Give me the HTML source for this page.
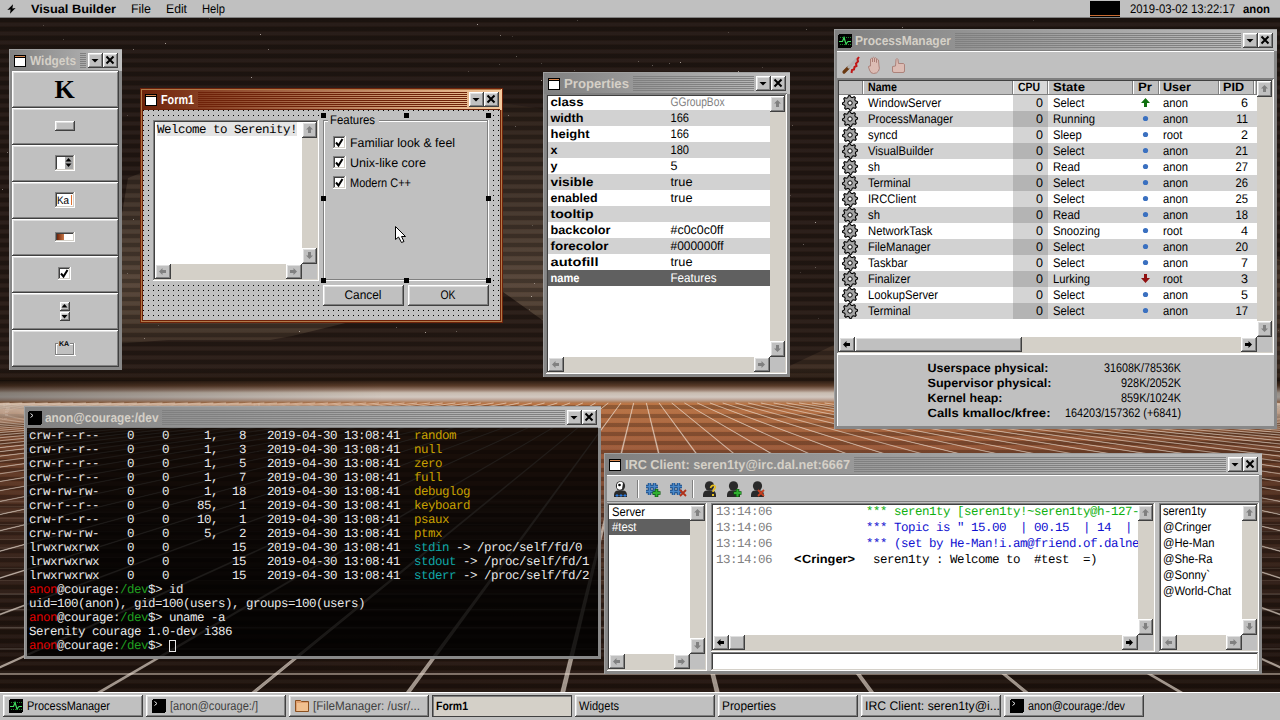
<!DOCTYPE html>
<html><head><meta charset="utf-8"><title>Serenity</title>
<style>html,body{margin:0;padding:0;width:1280px;height:720px;overflow:hidden;background:#1c130f}svg{display:block}text{shape-rendering:auto;white-space:pre}path,circle,polygon,ellipse,polyline{shape-rendering:geometricPrecision}</style>
</head><body>
<svg width="1280" height="720" viewBox="0 0 1280 720" shape-rendering="crispEdges" text-rendering="geometricPrecision"><defs>
<linearGradient id="ga" x1="0" y1="0" x2="1" y2="0"><stop offset="0" stop-color="#6e2209"/><stop offset="1" stop-color="#f4ca9e"/></linearGradient>
<linearGradient id="gi" x1="0" y1="0" x2="1" y2="0"><stop offset="0" stop-color="#808080"/><stop offset="1" stop-color="#c0c0c0"/></linearGradient>
<linearGradient id="sky" x1="0" y1="0" x2="0" y2="1">
 <stop offset="0" stop-color="#231813"/>
 <stop offset="1" stop-color="#2a1d17"/>
</linearGradient>
<linearGradient id="mtnL" x1="0" x2="0" gradientUnits="userSpaceOnUse" y1="100" y2="345">
 <stop offset="0" stop-color="#2a1e17"/>
 <stop offset="0.35" stop-color="#3e3027"/>
 <stop offset="0.75" stop-color="#564538"/>
 <stop offset="0.9" stop-color="#4a3a2e"/>
 <stop offset="1" stop-color="#3a2c22"/>
</linearGradient>
<linearGradient id="mtnR" x1="0" y1="0" x2="0" y2="1">
 <stop offset="0" stop-color="#463428"/>
 <stop offset="1" stop-color="#3a2a20"/>
</linearGradient>
<linearGradient id="hz" x1="0" x2="0" gradientUnits="userSpaceOnUse" y1="368" y2="403">
 <stop offset="0" stop-color="#22170f" stop-opacity="0"/>
 <stop offset="0.34" stop-color="#26180f" stop-opacity="0.9"/>
 <stop offset="0.51" stop-color="#5a3c2a" stop-opacity="1"/>
 <stop offset="0.63" stop-color="#9a8070" stop-opacity="1"/>
 <stop offset="0.71" stop-color="#c8bcb0" stop-opacity="1"/>
 <stop offset="0.83" stop-color="#d2c8c0" stop-opacity="1"/>
 <stop offset="0.91" stop-color="#bca496" stop-opacity="1"/>
 <stop offset="1" stop-color="#b07448" stop-opacity="1"/>
</linearGradient>
<linearGradient id="hzx" x1="0" y1="0" x2="1" y2="0">
 <stop offset="0" stop-color="#000" stop-opacity="0.35"/>
 <stop offset="0.3" stop-color="#000" stop-opacity="0"/>
 <stop offset="0.7" stop-color="#000" stop-opacity="0"/>
 <stop offset="1" stop-color="#000" stop-opacity="0.25"/>
</linearGradient>
<linearGradient id="floor" x1="0" y1="0" x2="0" y2="1">
 <stop offset="0" stop-color="#ba7444"/>
 <stop offset="0.14" stop-color="#a05c3a"/>
 <stop offset="0.40" stop-color="#5e3a2a"/>
 <stop offset="0.68" stop-color="#38241a"/>
 <stop offset="1" stop-color="#301d14"/>
</linearGradient>
<radialGradient id="fvig" gradientUnits="userSpaceOnUse" cx="640" cy="403" r="700" gradientTransform="translate(640 403) scale(1 0.45) translate(-640 -403)">
 <stop offset="0" stop-color="#000" stop-opacity="0"/>
 <stop offset="0.45" stop-color="#000" stop-opacity="0.05"/>
 <stop offset="1" stop-color="#000" stop-opacity="0.35"/>
</radialGradient>
<pattern id="stripes" width="8" height="9" patternUnits="userSpaceOnUse">
 <rect width="8" height="4" fill="#000" fill-opacity="0.22"/>
 <rect y="5" width="8" height="3" fill="#fff" fill-opacity="0.025"/>
</pattern>
<pattern id="dots" width="5" height="5" patternUnits="userSpaceOnUse" x="143" y="110">
 <rect width="1" height="1" fill="#000"/>
</pattern>
</defs>
<rect x="0" y="0" width="1280" height="720" fill="#1c130f"/>
<rect x="0" y="18" width="1280" height="385" fill="url(#sky)"/>
<polygon points="100,345 128,178 300,110 480,100 620,120 700,376 560,376 545,322 503,292 440,300 292,336 270,340 168,340" fill="url(#mtnL)" shape-rendering="geometricPrecision"/>
<polygon points="760,380 834,345 1000,250 1180,230 1280,260 1280,380" fill="url(#mtnR)" shape-rendering="geometricPrecision"/>
<rect x="663" y="95" width="1" height="1" fill="#d8d0c8" fill-opacity="0.7"/><rect x="98" y="55" width="1" height="1" fill="#d8d0c8" fill-opacity="0.25"/><rect x="748" y="316" width="1" height="1" fill="#d8d0c8" fill-opacity="0.25"/><rect x="1039" y="127" width="1" height="1" fill="#d8d0c8" fill-opacity="0.25"/><rect x="176" y="240" width="1" height="1" fill="#d8d0c8" fill-opacity="0.7"/><rect x="143" y="141" width="1" height="1" fill="#d8d0c8" fill-opacity="0.25"/><rect x="1128" y="235" width="1" height="1" fill="#d8d0c8" fill-opacity="0.25"/><rect x="1158" y="81" width="1" height="1" fill="#d8d0c8" fill-opacity="0.35"/><rect x="1193" y="49" width="1" height="1" fill="#d8d0c8" fill-opacity="0.7"/><rect x="101" y="131" width="1" height="1" fill="#d8d0c8" fill-opacity="0.25"/><rect x="1140" y="86" width="1" height="1" fill="#d8d0c8" fill-opacity="0.5"/><rect x="858" y="91" width="1" height="1" fill="#d8d0c8" fill-opacity="0.25"/><rect x="1169" y="175" width="1" height="1" fill="#d8d0c8" fill-opacity="0.35"/><rect x="211" y="315" width="1" height="1" fill="#d8d0c8" fill-opacity="0.35"/><rect x="762" y="67" width="1" height="1" fill="#d8d0c8" fill-opacity="0.25"/><rect x="1155" y="48" width="1" height="1" fill="#d8d0c8" fill-opacity="0.35"/><rect x="1016" y="290" width="1" height="1" fill="#d8d0c8" fill-opacity="0.7"/><rect x="643" y="256" width="1" height="1" fill="#d8d0c8" fill-opacity="0.7"/><rect x="740" y="171" width="1" height="1" fill="#d8d0c8" fill-opacity="0.35"/><rect x="368" y="142" width="1" height="1" fill="#d8d0c8" fill-opacity="0.25"/><rect x="1176" y="171" width="1" height="1" fill="#d8d0c8" fill-opacity="0.7"/><rect x="703" y="247" width="1" height="1" fill="#d8d0c8" fill-opacity="0.5"/><rect x="1247" y="55" width="1" height="1" fill="#d8d0c8" fill-opacity="0.25"/><rect x="1048" y="232" width="1" height="1" fill="#d8d0c8" fill-opacity="0.35"/><rect x="700" y="95" width="1" height="1" fill="#d8d0c8" fill-opacity="0.7"/><rect x="863" y="38" width="1" height="1" fill="#d8d0c8" fill-opacity="0.25"/><rect x="1142" y="311" width="1" height="1" fill="#d8d0c8" fill-opacity="0.5"/><rect x="696" y="197" width="1" height="1" fill="#d8d0c8" fill-opacity="0.7"/><rect x="1187" y="251" width="1" height="1" fill="#d8d0c8" fill-opacity="0.25"/><rect x="191" y="156" width="1" height="1" fill="#d8d0c8" fill-opacity="0.7"/><rect x="133" y="49" width="1" height="1" fill="#d8d0c8" fill-opacity="0.5"/><rect x="1183" y="246" width="1" height="1" fill="#d8d0c8" fill-opacity="0.5"/><rect x="790" y="195" width="1" height="1" fill="#d8d0c8" fill-opacity="0.25"/><rect x="945" y="199" width="1" height="1" fill="#d8d0c8" fill-opacity="0.35"/><rect x="1251" y="77" width="1" height="1" fill="#d8d0c8" fill-opacity="0.7"/><rect x="120" y="129" width="1" height="1" fill="#d8d0c8" fill-opacity="0.5"/><rect x="264" y="144" width="1" height="1" fill="#d8d0c8" fill-opacity="0.7"/><rect x="800" y="272" width="1" height="1" fill="#d8d0c8" fill-opacity="0.25"/><rect x="340" y="247" width="1" height="1" fill="#d8d0c8" fill-opacity="0.7"/><rect x="1125" y="160" width="1" height="1" fill="#d8d0c8" fill-opacity="0.35"/><rect x="881" y="299" width="1" height="1" fill="#d8d0c8" fill-opacity="0.5"/><rect x="850" y="201" width="1" height="1" fill="#d8d0c8" fill-opacity="0.7"/><rect x="472" y="95" width="1" height="1" fill="#d8d0c8" fill-opacity="0.25"/><rect x="360" y="95" width="1" height="1" fill="#d8d0c8" fill-opacity="0.35"/><rect x="477" y="24" width="1" height="1" fill="#d8d0c8" fill-opacity="0.7"/><rect x="1206" y="111" width="1" height="1" fill="#d8d0c8" fill-opacity="0.5"/><rect x="577" y="20" width="1" height="1" fill="#d8d0c8" fill-opacity="0.35"/><rect x="858" y="291" width="1" height="1" fill="#d8d0c8" fill-opacity="0.5"/><rect x="1248" y="307" width="1" height="1" fill="#d8d0c8" fill-opacity="0.5"/><rect x="257" y="281" width="1" height="1" fill="#d8d0c8" fill-opacity="0.25"/><rect x="935" y="304" width="1" height="1" fill="#d8d0c8" fill-opacity="0.7"/><rect x="815" y="222" width="1" height="1" fill="#d8d0c8" fill-opacity="0.7"/><rect x="212" y="264" width="1" height="1" fill="#d8d0c8" fill-opacity="0.7"/><rect x="127" y="115" width="1" height="1" fill="#d8d0c8" fill-opacity="0.25"/><rect x="427" y="243" width="1" height="1" fill="#d8d0c8" fill-opacity="0.35"/><rect x="225" y="192" width="1" height="1" fill="#d8d0c8" fill-opacity="0.25"/><rect x="209" y="18" width="1" height="1" fill="#d8d0c8" fill-opacity="0.35"/><rect x="1098" y="69" width="1" height="1" fill="#d8d0c8" fill-opacity="0.5"/><rect x="1256" y="31" width="1" height="1" fill="#d8d0c8" fill-opacity="0.25"/><rect x="425" y="332" width="1" height="1" fill="#d8d0c8" fill-opacity="0.7"/><rect x="304" y="147" width="1" height="1" fill="#d8d0c8" fill-opacity="0.5"/><rect x="1233" y="204" width="1" height="1" fill="#d8d0c8" fill-opacity="0.7"/><rect x="251" y="77" width="1" height="1" fill="#d8d0c8" fill-opacity="0.7"/><rect x="954" y="263" width="1" height="1" fill="#d8d0c8" fill-opacity="0.7"/><rect x="638" y="61" width="1" height="1" fill="#d8d0c8" fill-opacity="0.35"/><rect x="209" y="193" width="1" height="1" fill="#d8d0c8" fill-opacity="0.5"/><rect x="980" y="100" width="1" height="1" fill="#d8d0c8" fill-opacity="0.25"/><rect x="420" y="288" width="1" height="1" fill="#d8d0c8" fill-opacity="0.5"/><rect x="300" y="296" width="1" height="1" fill="#d8d0c8" fill-opacity="0.25"/><rect x="1081" y="170" width="1" height="1" fill="#d8d0c8" fill-opacity="0.25"/><rect x="534" y="283" width="1" height="1" fill="#d8d0c8" fill-opacity="0.5"/><rect x="342" y="200" width="1" height="1" fill="#d8d0c8" fill-opacity="0.35"/><rect x="1090" y="295" width="1" height="1" fill="#d8d0c8" fill-opacity="0.5"/><rect x="456" y="331" width="1" height="1" fill="#d8d0c8" fill-opacity="0.35"/><rect x="490" y="223" width="1" height="1" fill="#d8d0c8" fill-opacity="0.35"/><rect x="409" y="283" width="1" height="1" fill="#d8d0c8" fill-opacity="0.7"/><rect x="728" y="32" width="1" height="1" fill="#d8d0c8" fill-opacity="0.25"/><rect x="572" y="259" width="1" height="1" fill="#d8d0c8" fill-opacity="0.5"/><rect x="396" y="327" width="1" height="1" fill="#d8d0c8" fill-opacity="0.5"/><rect x="915" y="196" width="1" height="1" fill="#d8d0c8" fill-opacity="0.5"/><rect x="164" y="130" width="1" height="1" fill="#d8d0c8" fill-opacity="0.25"/><rect x="464" y="258" width="1" height="1" fill="#d8d0c8" fill-opacity="0.35"/><rect x="691" y="122" width="1" height="1" fill="#d8d0c8" fill-opacity="0.7"/><rect x="1278" y="330" width="1" height="1" fill="#d8d0c8" fill-opacity="0.25"/><rect x="981" y="194" width="1" height="1" fill="#d8d0c8" fill-opacity="0.25"/><rect x="245" y="216" width="1" height="1" fill="#d8d0c8" fill-opacity="0.35"/><rect x="979" y="109" width="1" height="1" fill="#d8d0c8" fill-opacity="0.7"/><rect x="680" y="62" width="1" height="1" fill="#d8d0c8" fill-opacity="0.7"/><rect x="948" y="223" width="1" height="1" fill="#d8d0c8" fill-opacity="0.25"/><rect x="325" y="105" width="1" height="1" fill="#d8d0c8" fill-opacity="0.35"/><rect x="56" y="95" width="1" height="1" fill="#d8d0c8" fill-opacity="0.7"/><rect x="299" y="331" width="1" height="1" fill="#d8d0c8" fill-opacity="0.7"/><rect x="717" y="97" width="1" height="1" fill="#d8d0c8" fill-opacity="0.35"/><rect x="43" y="25" width="1" height="1" fill="#d8d0c8" fill-opacity="0.25"/><rect x="1078" y="89" width="1" height="1" fill="#d8d0c8" fill-opacity="0.7"/><rect x="398" y="126" width="1" height="1" fill="#d8d0c8" fill-opacity="0.25"/><rect x="515" y="126" width="1" height="1" fill="#d8d0c8" fill-opacity="0.5"/><rect x="1026" y="141" width="1" height="1" fill="#d8d0c8" fill-opacity="0.5"/><rect x="531" y="296" width="1" height="1" fill="#d8d0c8" fill-opacity="0.7"/><rect x="268" y="49" width="1" height="1" fill="#d8d0c8" fill-opacity="0.5"/><rect x="938" y="316" width="1" height="1" fill="#d8d0c8" fill-opacity="0.7"/><rect x="1027" y="84" width="1" height="1" fill="#d8d0c8" fill-opacity="0.35"/><rect x="1072" y="279" width="1" height="1" fill="#d8d0c8" fill-opacity="0.25"/><rect x="901" y="111" width="1" height="1" fill="#d8d0c8" fill-opacity="0.25"/><rect x="306" y="106" width="1" height="1" fill="#d8d0c8" fill-opacity="0.35"/><rect x="969" y="334" width="1" height="1" fill="#d8d0c8" fill-opacity="0.25"/><rect x="1139" y="49" width="1" height="1" fill="#d8d0c8" fill-opacity="0.5"/><rect x="1061" y="289" width="1" height="1" fill="#d8d0c8" fill-opacity="0.7"/><rect x="217" y="304" width="1" height="1" fill="#d8d0c8" fill-opacity="0.25"/><rect x="508" y="115" width="1" height="1" fill="#d8d0c8" fill-opacity="0.5"/><rect x="86" y="68" width="1" height="1" fill="#d8d0c8" fill-opacity="0.7"/><rect x="1150" y="32" width="1" height="1" fill="#d8d0c8" fill-opacity="0.25"/><rect x="907" y="184" width="1" height="1" fill="#d8d0c8" fill-opacity="0.35"/><rect x="567" y="249" width="1" height="1" fill="#d8d0c8" fill-opacity="0.7"/><rect x="1039" y="144" width="1" height="1" fill="#d8d0c8" fill-opacity="0.5"/><rect x="1145" y="121" width="1" height="1" fill="#d8d0c8" fill-opacity="0.7"/><rect x="280" y="231" width="1" height="1" fill="#d8d0c8" fill-opacity="0.25"/><rect x="803" y="244" width="1" height="1" fill="#d8d0c8" fill-opacity="0.5"/><rect x="148" y="141" width="1" height="1" fill="#d8d0c8" fill-opacity="0.7"/><rect x="149" y="126" width="1" height="1" fill="#d8d0c8" fill-opacity="0.5"/><rect x="250" y="97" width="1" height="1" fill="#d8d0c8" fill-opacity="0.5"/><rect x="292" y="147" width="1" height="1" fill="#d8d0c8" fill-opacity="0.35"/><rect x="957" y="130" width="1" height="1" fill="#d8d0c8" fill-opacity="0.25"/><rect x="815" y="267" width="1" height="1" fill="#d8d0c8" fill-opacity="0.35"/><rect x="458" y="100" width="1" height="1" fill="#d8d0c8" fill-opacity="0.7"/><rect x="1055" y="224" width="1" height="1" fill="#d8d0c8" fill-opacity="0.5"/><rect x="862" y="118" width="1" height="1" fill="#d8d0c8" fill-opacity="0.5"/><rect x="652" y="65" width="1" height="1" fill="#d8d0c8" fill-opacity="0.5"/><rect x="39" y="191" width="1" height="1" fill="#d8d0c8" fill-opacity="0.7"/><rect x="902" y="27" width="1" height="1" fill="#d8d0c8" fill-opacity="0.7"/><rect x="678" y="282" width="1" height="1" fill="#d8d0c8" fill-opacity="0.5"/><rect x="1049" y="50" width="1" height="1" fill="#d8d0c8" fill-opacity="0.25"/><rect x="468" y="71" width="1" height="1" fill="#d8d0c8" fill-opacity="0.25"/><rect x="543" y="157" width="1" height="1" fill="#d8d0c8" fill-opacity="0.25"/><rect x="371" y="156" width="1" height="1" fill="#d8d0c8" fill-opacity="0.35"/><rect x="864" y="150" width="1" height="1" fill="#d8d0c8" fill-opacity="0.7"/><rect x="305" y="292" width="1" height="1" fill="#d8d0c8" fill-opacity="0.7"/><rect x="669" y="63" width="1" height="1" fill="#d8d0c8" fill-opacity="0.5"/><rect x="117" y="111" width="1" height="1" fill="#d8d0c8" fill-opacity="0.7"/><rect x="148" y="155" width="1" height="1" fill="#d8d0c8" fill-opacity="0.25"/><rect x="181" y="151" width="1" height="1" fill="#d8d0c8" fill-opacity="0.25"/><rect x="1245" y="131" width="1" height="1" fill="#d8d0c8" fill-opacity="0.25"/><rect x="541" y="80" width="1" height="1" fill="#d8d0c8" fill-opacity="0.7"/><rect x="23" y="191" width="1" height="1" fill="#d8d0c8" fill-opacity="0.7"/><rect x="548" y="336" width="1" height="1" fill="#d8d0c8" fill-opacity="0.35"/><rect x="88" y="287" width="1" height="1" fill="#d8d0c8" fill-opacity="0.35"/><rect x="224" y="100" width="1" height="1" fill="#d8d0c8" fill-opacity="0.5"/><rect x="103" y="110" width="1" height="1" fill="#d8d0c8" fill-opacity="0.35"/><rect x="638" y="339" width="1" height="1" fill="#d8d0c8" fill-opacity="0.5"/><rect x="1087" y="123" width="1" height="1" fill="#d8d0c8" fill-opacity="0.5"/><rect x="912" y="274" width="1" height="1" fill="#d8d0c8" fill-opacity="0.35"/><rect x="554" y="195" width="1" height="1" fill="#d8d0c8" fill-opacity="0.25"/><rect x="512" y="36" width="1" height="1" fill="#d8d0c8" fill-opacity="0.25"/><rect x="37" y="276" width="1" height="1" fill="#d8d0c8" fill-opacity="0.35"/><rect x="1053" y="261" width="1" height="1" fill="#d8d0c8" fill-opacity="0.35"/><rect x="915" y="72" width="1" height="1" fill="#d8d0c8" fill-opacity="0.7"/><rect x="1013" y="297" width="1" height="1" fill="#d8d0c8" fill-opacity="0.7"/><rect x="1037" y="175" width="1" height="1" fill="#d8d0c8" fill-opacity="0.35"/><rect x="470" y="193" width="1" height="1" fill="#d8d0c8" fill-opacity="0.35"/><rect x="286" y="225" width="1" height="1" fill="#d8d0c8" fill-opacity="0.5"/><rect x="111" y="84" width="1" height="1" fill="#d8d0c8" fill-opacity="0.25"/><rect x="144" y="338" width="1" height="1" fill="#d8d0c8" fill-opacity="0.5"/><rect x="882" y="101" width="1" height="1" fill="#d8d0c8" fill-opacity="0.25"/><rect x="173" y="213" width="1" height="1" fill="#d8d0c8" fill-opacity="0.5"/><rect x="1226" y="142" width="1" height="1" fill="#d8d0c8" fill-opacity="0.5"/><rect x="92" y="253" width="1" height="1" fill="#d8d0c8" fill-opacity="0.35"/><rect x="322" y="155" width="1" height="1" fill="#d8d0c8" fill-opacity="0.7"/><rect x="7" y="152" width="1" height="1" fill="#d8d0c8" fill-opacity="0.5"/><rect x="673" y="298" width="1" height="1" fill="#d8d0c8" fill-opacity="0.5"/><rect x="500" y="35" width="1" height="1" fill="#d8d0c8" fill-opacity="0.5"/><rect x="446" y="200" width="1" height="1" fill="#d8d0c8" fill-opacity="0.35"/><rect x="2" y="189" width="1" height="1" fill="#d8d0c8" fill-opacity="0.7"/><rect x="171" y="261" width="1" height="1" fill="#d8d0c8" fill-opacity="0.5"/><rect x="1029" y="120" width="1" height="1" fill="#d8d0c8" fill-opacity="0.35"/><rect x="1033" y="20" width="1" height="1" fill="#d8d0c8" fill-opacity="0.25"/><rect x="541" y="63" width="1" height="1" fill="#d8d0c8" fill-opacity="0.35"/><rect x="818" y="318" width="1" height="1" fill="#d8d0c8" fill-opacity="0.25"/><rect x="806" y="29" width="1" height="1" fill="#d8d0c8" fill-opacity="0.5"/><rect x="623" y="340" width="1" height="1" fill="#d8d0c8" fill-opacity="0.35"/><rect x="173" y="317" width="1" height="1" fill="#d8d0c8" fill-opacity="0.35"/><rect x="1221" y="217" width="1" height="1" fill="#d8d0c8" fill-opacity="0.5"/><rect x="1012" y="94" width="1" height="1" fill="#d8d0c8" fill-opacity="0.5"/><rect x="1267" y="92" width="1" height="1" fill="#d8d0c8" fill-opacity="0.25"/><rect x="1050" y="339" width="1" height="1" fill="#d8d0c8" fill-opacity="0.7"/><rect x="1035" y="89" width="1" height="1" fill="#d8d0c8" fill-opacity="0.25"/><rect x="1196" y="135" width="1" height="1" fill="#d8d0c8" fill-opacity="0.25"/><rect x="63" y="39" width="1" height="1" fill="#d8d0c8" fill-opacity="0.35"/><rect x="738" y="71" width="1" height="1" fill="#d8d0c8" fill-opacity="0.7"/><rect x="924" y="303" width="1" height="1" fill="#d8d0c8" fill-opacity="0.25"/><rect x="38" y="338" width="1" height="1" fill="#d8d0c8" fill-opacity="0.35"/><rect x="1002" y="153" width="1" height="1" fill="#d8d0c8" fill-opacity="0.25"/><rect x="935" y="53" width="1" height="1" fill="#d8d0c8" fill-opacity="0.25"/><rect x="1077" y="51" width="1" height="1" fill="#d8d0c8" fill-opacity="0.7"/><rect x="516" y="56" width="1" height="1" fill="#d8d0c8" fill-opacity="0.5"/><rect x="480" y="123" width="1" height="1" fill="#d8d0c8" fill-opacity="0.35"/><rect x="942" y="270" width="1" height="1" fill="#d8d0c8" fill-opacity="0.7"/><rect x="157" y="263" width="1" height="1" fill="#d8d0c8" fill-opacity="0.5"/><rect x="95" y="333" width="1" height="1" fill="#d8d0c8" fill-opacity="0.35"/><rect x="158" y="325" width="1" height="1" fill="#d8d0c8" fill-opacity="0.35"/><rect x="679" y="148" width="1" height="1" fill="#d8d0c8" fill-opacity="0.5"/><rect x="1272" y="308" width="1" height="1" fill="#d8d0c8" fill-opacity="0.35"/><rect x="25" y="264" width="1" height="1" fill="#d8d0c8" fill-opacity="0.25"/><rect x="994" y="155" width="1" height="1" fill="#d8d0c8" fill-opacity="0.25"/><rect x="445" y="268" width="1" height="1" fill="#d8d0c8" fill-opacity="0.5"/><rect x="1057" y="164" width="1" height="1" fill="#d8d0c8" fill-opacity="0.7"/><rect x="954" y="256" width="1" height="1" fill="#d8d0c8" fill-opacity="0.25"/><rect x="1124" y="120" width="1" height="1" fill="#d8d0c8" fill-opacity="0.5"/><rect x="175" y="260" width="1" height="1" fill="#d8d0c8" fill-opacity="0.25"/><rect x="593" y="252" width="1" height="1" fill="#d8d0c8" fill-opacity="0.25"/><rect x="1037" y="248" width="1" height="1" fill="#d8d0c8" fill-opacity="0.5"/><rect x="792" y="125" width="1" height="1" fill="#d8d0c8" fill-opacity="0.35"/><rect x="152" y="315" width="1" height="1" fill="#d8d0c8" fill-opacity="0.25"/><rect x="290" y="286" width="1" height="1" fill="#d8d0c8" fill-opacity="0.5"/><rect x="736" y="85" width="1" height="1" fill="#d8d0c8" fill-opacity="0.5"/><rect x="230" y="204" width="1" height="1" fill="#d8d0c8" fill-opacity="0.35"/><rect x="1019" y="266" width="1" height="1" fill="#d8d0c8" fill-opacity="0.7"/><rect x="50" y="99" width="1" height="1" fill="#d8d0c8" fill-opacity="0.25"/><rect x="1006" y="248" width="1" height="1" fill="#d8d0c8" fill-opacity="0.7"/><rect x="618" y="90" width="1" height="1" fill="#d8d0c8" fill-opacity="0.7"/><rect x="704" y="210" width="1" height="1" fill="#d8d0c8" fill-opacity="0.5"/><rect x="247" y="187" width="1" height="1" fill="#d8d0c8" fill-opacity="0.25"/><rect x="664" y="191" width="1" height="1" fill="#d8d0c8" fill-opacity="0.7"/><rect x="245" y="118" width="1" height="1" fill="#d8d0c8" fill-opacity="0.25"/><rect x="593" y="147" width="1" height="1" fill="#d8d0c8" fill-opacity="0.5"/><rect x="133" y="219" width="1" height="1" fill="#d8d0c8" fill-opacity="0.7"/><rect x="1206" y="57" width="1" height="1" fill="#d8d0c8" fill-opacity="0.5"/><rect x="876" y="158" width="1" height="1" fill="#d8d0c8" fill-opacity="0.25"/><rect x="574" y="70" width="1" height="1" fill="#d8d0c8" fill-opacity="0.25"/><rect x="584" y="94" width="1" height="1" fill="#d8d0c8" fill-opacity="0.35"/><rect x="544" y="241" width="1" height="1" fill="#d8d0c8" fill-opacity="0.5"/><rect x="388" y="209" width="1" height="1" fill="#d8d0c8" fill-opacity="0.7"/><rect x="59" y="222" width="1" height="1" fill="#d8d0c8" fill-opacity="0.35"/><rect x="165" y="43" width="1" height="1" fill="#d8d0c8" fill-opacity="0.7"/><rect x="923" y="332" width="1" height="1" fill="#d8d0c8" fill-opacity="0.35"/><rect x="586" y="266" width="1" height="1" fill="#d8d0c8" fill-opacity="0.25"/><rect x="1126" y="83" width="1" height="1" fill="#d8d0c8" fill-opacity="0.35"/><rect x="967" y="230" width="1" height="1" fill="#d8d0c8" fill-opacity="0.5"/><rect x="577" y="170" width="1" height="1" fill="#d8d0c8" fill-opacity="0.5"/><rect x="532" y="225" width="1" height="1" fill="#d8d0c8" fill-opacity="0.35"/><rect x="616" y="265" width="1" height="1" fill="#d8d0c8" fill-opacity="0.7"/><rect x="245" y="103" width="1" height="1" fill="#d8d0c8" fill-opacity="0.35"/><rect x="153" y="124" width="1" height="1" fill="#d8d0c8" fill-opacity="0.7"/><rect x="1127" y="130" width="1" height="1" fill="#d8d0c8" fill-opacity="0.7"/><rect x="681" y="248" width="1" height="1" fill="#d8d0c8" fill-opacity="0.7"/><rect x="285" y="298" width="1" height="1" fill="#d8d0c8" fill-opacity="0.35"/><rect x="499" y="64" width="1" height="1" fill="#d8d0c8" fill-opacity="0.35"/><rect x="700" y="302" width="1" height="1" fill="#d8d0c8" fill-opacity="0.25"/><rect x="653" y="140" width="1" height="1" fill="#d8d0c8" fill-opacity="0.5"/><rect x="529" y="309" width="1" height="1" fill="#d8d0c8" fill-opacity="0.35"/><rect x="41" y="229" width="1" height="1" fill="#d8d0c8" fill-opacity="0.7"/><rect x="847" y="286" width="1" height="1" fill="#d8d0c8" fill-opacity="0.35"/><rect x="771" y="156" width="1" height="1" fill="#d8d0c8" fill-opacity="0.5"/><rect x="127" y="273" width="1" height="1" fill="#d8d0c8" fill-opacity="0.5"/><rect x="1176" y="202" width="1" height="1" fill="#d8d0c8" fill-opacity="0.35"/><rect x="1030" y="288" width="1" height="1" fill="#d8d0c8" fill-opacity="0.35"/><rect x="189" y="156" width="1" height="1" fill="#d8d0c8" fill-opacity="0.35"/><rect x="787" y="222" width="1" height="1" fill="#d8d0c8" fill-opacity="0.7"/><rect x="884" y="177" width="1" height="1" fill="#d8d0c8" fill-opacity="0.25"/><rect x="260" y="34" width="1" height="1" fill="#d8d0c8" fill-opacity="0.7"/><rect x="969" y="318" width="1" height="1" fill="#d8d0c8" fill-opacity="0.7"/>
<rect x="0" y="368" width="1280" height="36" fill="url(#hz)"/>
<rect x="0" y="403" width="1280" height="317" fill="url(#floor)"/>
<rect x="0" y="403" width="1280" height="317" fill="url(#fvig)"/>
<rect x="0" y="380" width="1280" height="23" fill="url(#hzx)"/>
<rect x="0" y="18" width="1280" height="363" fill="url(#stripes)"/>
<rect x="0" y="403" width="1280" height="317" fill="url(#stripes)"/>
<path d="M-118.21,403 L-117.85,403 L-9357.81,720 L-9362.52,720 Z M-105.47,403 L-105.11,403 L-9189.74,720 L-9194.45,720 Z M-92.73,403 L-92.37,403 L-9021.67,720 L-9026.38,720 Z M-79.99,403 L-79.63,403 L-8853.60,720 L-8858.31,720 Z M-67.25,403 L-66.89,403 L-8685.53,720 L-8690.24,720 Z M-54.51,403 L-54.15,403 L-8517.46,720 L-8522.17,720 Z M-41.77,403 L-41.41,403 L-8349.39,720 L-8354.10,720 Z M-29.03,403 L-28.67,403 L-8181.32,720 L-8186.03,720 Z M-16.29,403 L-15.93,403 L-8013.25,720 L-8017.96,720 Z M-3.55,403 L-3.19,403 L-7845.18,720 L-7849.89,720 Z M9.19,403 L9.55,403 L-7677.11,720 L-7681.82,720 Z M21.93,403 L22.29,403 L-7509.04,720 L-7513.75,720 Z M34.67,403 L35.03,403 L-7340.97,720 L-7345.68,720 Z M47.41,403 L47.77,403 L-7172.90,720 L-7177.61,720 Z M60.15,403 L60.51,403 L-7004.83,720 L-7009.54,720 Z M72.89,403 L73.25,403 L-6836.76,720 L-6841.47,720 Z M85.63,403 L85.99,403 L-6668.69,720 L-6673.40,720 Z M98.37,403 L98.73,403 L-6500.62,720 L-6505.33,720 Z M111.11,403 L111.47,403 L-6332.55,720 L-6337.26,720 Z M123.85,403 L124.21,403 L-6164.48,720 L-6169.19,720 Z M136.59,403 L136.95,403 L-5996.41,720 L-6001.12,720 Z M149.33,403 L149.69,403 L-5828.34,720 L-5833.05,720 Z M162.07,403 L162.43,403 L-5660.27,720 L-5664.98,720 Z M174.81,403 L175.17,403 L-5492.20,720 L-5496.91,720 Z M187.55,403 L187.91,403 L-5324.13,720 L-5328.84,720 Z M200.29,403 L200.65,403 L-5156.06,720 L-5160.77,720 Z M213.03,403 L213.39,403 L-4987.99,720 L-4992.70,720 Z M225.77,403 L226.13,403 L-4819.92,720 L-4824.63,720 Z M238.51,403 L238.87,403 L-4651.85,720 L-4656.56,720 Z M251.25,403 L251.61,403 L-4483.78,720 L-4488.49,720 Z M263.99,403 L264.35,403 L-4315.71,720 L-4320.42,720 Z M276.73,403 L277.09,403 L-4147.64,720 L-4152.35,720 Z M289.47,403 L289.83,403 L-3979.57,720 L-3984.28,720 Z M302.21,403 L302.57,403 L-3811.50,720 L-3816.21,720 Z M314.95,403 L315.31,403 L-3643.43,720 L-3648.14,720 Z M327.69,403 L328.05,403 L-3475.36,720 L-3480.07,720 Z M340.43,403 L340.79,403 L-3307.29,720 L-3312.00,720 Z M353.17,403 L353.53,403 L-3139.22,720 L-3143.93,720 Z M365.91,403 L366.27,403 L-2971.15,720 L-2975.86,720 Z M378.65,403 L379.01,403 L-2803.08,720 L-2807.79,720 Z M391.39,403 L391.75,403 L-2635.01,720 L-2639.72,720 Z M404.13,403 L404.49,403 L-2466.94,720 L-2471.65,720 Z M416.87,403 L417.23,403 L-2298.87,720 L-2303.58,720 Z M429.61,403 L429.97,403 L-2130.80,720 L-2135.51,720 Z M442.35,403 L442.71,403 L-1962.73,720 L-1967.44,720 Z M455.09,403 L455.45,403 L-1794.66,720 L-1799.37,720 Z M467.83,403 L468.19,403 L-1626.59,720 L-1631.30,720 Z M480.57,403 L480.93,403 L-1458.52,720 L-1463.23,720 Z M493.31,403 L493.67,403 L-1290.45,720 L-1295.16,720 Z M506.05,403 L506.41,403 L-1122.38,720 L-1127.09,720 Z M518.79,403 L519.15,403 L-954.31,720 L-959.02,720 Z M531.53,403 L531.89,403 L-786.24,720 L-790.95,720 Z M544.27,403 L544.63,403 L-618.17,720 L-622.88,720 Z M557.01,403 L557.37,403 L-450.10,720 L-454.81,720 Z M569.75,403 L570.11,403 L-282.03,720 L-286.74,720 Z M582.49,403 L582.85,403 L-113.96,720 L-118.67,720 Z M595.23,403 L595.59,403 L54.11,720 L49.40,720 Z M607.97,403 L608.33,403 L222.18,720 L217.47,720 Z M620.71,403 L621.07,403 L390.25,720 L385.54,720 Z M633.45,403 L633.81,403 L558.32,720 L553.61,720 Z M646.19,403 L646.55,403 L726.39,720 L721.68,720 Z M658.93,403 L659.29,403 L894.46,720 L889.75,720 Z M671.67,403 L672.03,403 L1062.53,720 L1057.82,720 Z M684.41,403 L684.77,403 L1230.60,720 L1225.89,720 Z M697.15,403 L697.51,403 L1398.67,720 L1393.96,720 Z M709.89,403 L710.25,403 L1566.74,720 L1562.03,720 Z M722.63,403 L722.99,403 L1734.81,720 L1730.10,720 Z M735.37,403 L735.73,403 L1902.88,720 L1898.17,720 Z M748.11,403 L748.47,403 L2070.95,720 L2066.24,720 Z M760.85,403 L761.21,403 L2239.02,720 L2234.31,720 Z M773.59,403 L773.95,403 L2407.09,720 L2402.38,720 Z M786.33,403 L786.69,403 L2575.16,720 L2570.45,720 Z M799.07,403 L799.43,403 L2743.23,720 L2738.52,720 Z M811.81,403 L812.17,403 L2911.30,720 L2906.59,720 Z M824.55,403 L824.91,403 L3079.37,720 L3074.66,720 Z M837.29,403 L837.65,403 L3247.44,720 L3242.73,720 Z M850.03,403 L850.39,403 L3415.51,720 L3410.80,720 Z M862.77,403 L863.13,403 L3583.58,720 L3578.87,720 Z M875.51,403 L875.87,403 L3751.65,720 L3746.94,720 Z M888.25,403 L888.61,403 L3919.72,720 L3915.01,720 Z M900.99,403 L901.35,403 L4087.79,720 L4083.08,720 Z M913.73,403 L914.09,403 L4255.86,720 L4251.15,720 Z M926.47,403 L926.83,403 L4423.93,720 L4419.22,720 Z M939.21,403 L939.57,403 L4592.00,720 L4587.29,720 Z M951.95,403 L952.31,403 L4760.07,720 L4755.36,720 Z M964.69,403 L965.05,403 L4928.14,720 L4923.43,720 Z M977.43,403 L977.79,403 L5096.21,720 L5091.50,720 Z M990.17,403 L990.53,403 L5264.28,720 L5259.57,720 Z M1002.91,403 L1003.27,403 L5432.35,720 L5427.64,720 Z M1015.65,403 L1016.01,403 L5600.42,720 L5595.71,720 Z M1028.39,403 L1028.75,403 L5768.49,720 L5763.78,720 Z M1041.13,403 L1041.49,403 L5936.56,720 L5931.85,720 Z M1053.87,403 L1054.23,403 L6104.63,720 L6099.92,720 Z M1066.61,403 L1066.97,403 L6272.70,720 L6267.99,720 Z M1079.35,403 L1079.71,403 L6440.77,720 L6436.06,720 Z M1092.09,403 L1092.45,403 L6608.84,720 L6604.13,720 Z M1104.83,403 L1105.19,403 L6776.91,720 L6772.20,720 Z M1117.57,403 L1117.93,403 L6944.98,720 L6940.27,720 Z M1130.31,403 L1130.67,403 L7113.05,720 L7108.34,720 Z M1143.05,403 L1143.41,403 L7281.12,720 L7276.41,720 Z M1155.79,403 L1156.15,403 L7449.19,720 L7444.48,720 Z M1168.53,403 L1168.89,403 L7617.26,720 L7612.55,720 Z M1181.27,403 L1181.63,403 L7785.33,720 L7780.62,720 Z M1194.01,403 L1194.37,403 L7953.40,720 L7948.69,720 Z M1206.75,403 L1207.11,403 L8121.47,720 L8116.76,720 Z M1219.49,403 L1219.85,403 L8289.54,720 L8284.83,720 Z M1232.23,403 L1232.59,403 L8457.61,720 L8452.90,720 Z M1244.97,403 L1245.33,403 L8625.68,720 L8620.97,720 Z M1257.71,403 L1258.07,403 L8793.75,720 L8789.04,720 Z M1270.45,403 L1270.81,403 L8961.82,720 L8957.11,720 Z M1283.19,403 L1283.55,403 L9129.89,720 L9125.18,720 Z M1295.93,403 L1296.29,403 L9297.96,720 L9293.25,720 Z M1308.67,403 L1309.03,403 L9466.03,720 L9461.32,720 Z M1321.41,403 L1321.77,403 L9634.10,720 L9629.39,720 Z M1334.15,403 L1334.51,403 L9802.17,720 L9797.46,720 Z M1346.89,403 L1347.25,403 L9970.24,720 L9965.53,720 Z M1359.63,403 L1359.99,403 L10138.31,720 L10133.60,720 Z M1372.37,403 L1372.73,403 L10306.38,720 L10301.67,720 Z M1385.11,403 L1385.47,403 L10474.45,720 L10469.74,720 Z M1397.85,403 L1398.21,403 L10642.52,720 L10637.81,720 Z" fill="#f4e8dc" fill-opacity="0.6" stroke="#f4e8dc" stroke-opacity="0.45" stroke-width="0.7" shape-rendering="geometricPrecision"/>
<rect x="0" y="703.32" width="1280" height="1.6" fill="#f0e2d4" fill-opacity="0.55" shape-rendering="geometricPrecision"/><rect x="0" y="673.20" width="1280" height="1.6" fill="#f0e2d4" fill-opacity="0.55" shape-rendering="geometricPrecision"/><rect x="0" y="648.46" width="1280" height="1.0" fill="#f0e2d4" fill-opacity="0.30" shape-rendering="geometricPrecision"/><rect x="0" y="627.32" width="1280" height="1.0" fill="#f0e2d4" fill-opacity="0.30" shape-rendering="geometricPrecision"/><rect x="0" y="609.22" width="1280" height="1.0" fill="#f0e2d4" fill-opacity="0.30" shape-rendering="geometricPrecision"/><rect x="0" y="593.56" width="1280" height="1.0" fill="#f0e2d4" fill-opacity="0.30" shape-rendering="geometricPrecision"/><rect x="0" y="579.88" width="1280" height="1.0" fill="#f0e2d4" fill-opacity="0.14" shape-rendering="geometricPrecision"/><rect x="0" y="567.81" width="1280" height="1.0" fill="#f0e2d4" fill-opacity="0.14" shape-rendering="geometricPrecision"/><rect x="0" y="557.10" width="1280" height="1.0" fill="#f0e2d4" fill-opacity="0.14" shape-rendering="geometricPrecision"/><rect x="0" y="547.53" width="1280" height="1.0" fill="#f0e2d4" fill-opacity="0.14" shape-rendering="geometricPrecision"/><rect x="0" y="538.92" width="1280" height="1.0" fill="#f0e2d4" fill-opacity="0.14" shape-rendering="geometricPrecision"/><rect x="0" y="531.13" width="1280" height="1.0" fill="#f0e2d4" fill-opacity="0.14" shape-rendering="geometricPrecision"/><rect x="0" y="524.06" width="1280" height="1.0" fill="#f0e2d4" fill-opacity="0.14" shape-rendering="geometricPrecision"/><rect x="0" y="517.60" width="1280" height="1.0" fill="#f0e2d4" fill-opacity="0.14" shape-rendering="geometricPrecision"/><rect x="0" y="511.69" width="1280" height="1.0" fill="#f0e2d4" fill-opacity="0.14" shape-rendering="geometricPrecision"/><rect x="0" y="506.25" width="1280" height="1.0" fill="#f0e2d4" fill-opacity="0.14" shape-rendering="geometricPrecision"/><rect x="0" y="501.23" width="1280" height="1.0" fill="#f0e2d4" fill-opacity="0.14" shape-rendering="geometricPrecision"/>
<rect x="0" y="0" width="1280" height="17" fill="#c0c0c0"/>
<rect x="0" y="17" width="1280" height="1" fill="#808080"/>
<polygon points="13,4.3 7.3,10 10.6,9.6 10,13.7 15.6,8 12.4,8.4" fill="#000" shape-rendering="geometricPrecision"/>
<text x="31" y="13" font-size="12" fill="#000" font-weight="bold" textLength="85" lengthAdjust="spacingAndGlyphs" font-family='"Liberation Sans", sans-serif'>Visual Builder</text>
<text x="131" y="13" font-size="12.5" fill="#000" textLength="20" lengthAdjust="spacingAndGlyphs" font-family='"Liberation Sans", sans-serif'>File</text>
<text x="166" y="13" font-size="12.5" fill="#000" textLength="21" lengthAdjust="spacingAndGlyphs" font-family='"Liberation Sans", sans-serif'>Edit</text>
<text x="202" y="13" font-size="12.5" fill="#000" textLength="23" lengthAdjust="spacingAndGlyphs" font-family='"Liberation Sans", sans-serif'>Help</text>
<rect x="1090" y="1" width="30" height="16" fill="#000000"/>
<rect x="1090" y="15" width="30" height="1" fill="#c86a30"/>
<text x="1130" y="13" font-size="12.5" fill="#000" textLength="105" lengthAdjust="spacingAndGlyphs" font-family='"Liberation Sans", sans-serif'>2019-03-02 13:22:17</text>
<text x="1243" y="13" font-size="12" fill="#000" font-weight="bold" textLength="27" lengthAdjust="spacingAndGlyphs" font-family='"Liberation Sans", sans-serif'>anon</text>
<rect x="9" y="70" width="3" height="300" fill="#888888"/>
<rect x="119" y="70" width="3" height="300" fill="#888888"/>
<rect x="9" y="367" width="113" height="3" fill="#888888"/>
<rect x="9" y="49" width="113" height="22" fill="url(#gi)"/>
<rect x="9" y="49" width="113" height="1" fill="#a0a0a0"/>
<rect x="9" y="49" width="1" height="321" fill="#a0a0a0"/>
<rect x="12" y="70" width="107" height="1" fill="#808080"/>
<text x="30" y="65" font-size="13" fill="#d5d0c7" font-weight="bold" textLength="46" lengthAdjust="spacingAndGlyphs" font-family='"Liberation Sans", sans-serif'>Widgets</text>
<rect x="80" y="53" width="6" height="1" fill="#808080"/>
<rect x="80" y="55" width="6" height="1" fill="#808080"/>
<rect x="80" y="57" width="6" height="1" fill="#808080"/>
<rect x="80" y="59" width="6" height="1" fill="#808080"/>
<rect x="80" y="61" width="6" height="1" fill="#808080"/>
<rect x="80" y="63" width="6" height="1" fill="#808080"/>
<rect x="80" y="65" width="6" height="1" fill="#808080"/>
<rect x="80" y="67" width="6" height="1" fill="#808080"/>
<rect x="103" y="53" width="15" height="15" fill="#c0c0c0"/>
<rect x="103" y="53" width="14" height="1" fill="#ffffff"/>
<rect x="103" y="53" width="1" height="14" fill="#ffffff"/>
<rect x="103" y="67" width="15" height="1" fill="#404040"/>
<rect x="117" y="53" width="1" height="15" fill="#404040"/>
<rect x="104" y="54" width="12" height="1" fill="#dfdfdf"/>
<rect x="104" y="54" width="1" height="12" fill="#dfdfdf"/>
<rect x="104" y="66" width="13" height="1" fill="#808080"/>
<rect x="116" y="54" width="1" height="13" fill="#808080"/>
<rect x="88" y="53" width="15" height="15" fill="#c0c0c0"/>
<rect x="88" y="53" width="14" height="1" fill="#ffffff"/>
<rect x="88" y="53" width="1" height="14" fill="#ffffff"/>
<rect x="88" y="67" width="15" height="1" fill="#404040"/>
<rect x="102" y="53" width="1" height="15" fill="#404040"/>
<rect x="89" y="54" width="12" height="1" fill="#dfdfdf"/>
<rect x="89" y="54" width="1" height="12" fill="#dfdfdf"/>
<rect x="89" y="66" width="13" height="1" fill="#808080"/>
<rect x="101" y="54" width="1" height="13" fill="#808080"/>
<path d="M106.5,56.5 L113.5,63.5 M113.5,56.5 L106.5,63.5" stroke="#000" stroke-width="2"/>
<polygon points="91.5,59 98.5,59 95,62.5" fill="#000"/>
<rect x="14" y="55" width="12" height="12" fill="#000000" rx="1"/>
<rect x="15" y="56" width="10" height="1" fill="#d88850"/>
<rect x="15" y="58" width="10" height="8" fill="#ffffff"/>
<rect x="12" y="71" width="107" height="37" fill="#c0c0c0"/>
<rect x="12" y="71" width="106" height="1" fill="#ffffff"/>
<rect x="12" y="71" width="1" height="36" fill="#ffffff"/>
<rect x="12" y="107" width="107" height="1" fill="#404040"/>
<rect x="118" y="71" width="1" height="37" fill="#404040"/>
<rect x="13" y="72" width="104" height="1" fill="#dfdfdf"/>
<rect x="13" y="72" width="1" height="34" fill="#dfdfdf"/>
<rect x="13" y="106" width="105" height="1" fill="#808080"/>
<rect x="117" y="72" width="1" height="35" fill="#808080"/>
<rect x="12" y="108" width="107" height="37" fill="#c0c0c0"/>
<rect x="12" y="108" width="106" height="1" fill="#ffffff"/>
<rect x="12" y="108" width="1" height="36" fill="#ffffff"/>
<rect x="12" y="144" width="107" height="1" fill="#404040"/>
<rect x="118" y="108" width="1" height="37" fill="#404040"/>
<rect x="13" y="109" width="104" height="1" fill="#dfdfdf"/>
<rect x="13" y="109" width="1" height="34" fill="#dfdfdf"/>
<rect x="13" y="143" width="105" height="1" fill="#808080"/>
<rect x="117" y="109" width="1" height="35" fill="#808080"/>
<rect x="12" y="145" width="107" height="37" fill="#c0c0c0"/>
<rect x="12" y="145" width="106" height="1" fill="#ffffff"/>
<rect x="12" y="145" width="1" height="36" fill="#ffffff"/>
<rect x="12" y="181" width="107" height="1" fill="#404040"/>
<rect x="118" y="145" width="1" height="37" fill="#404040"/>
<rect x="13" y="146" width="104" height="1" fill="#dfdfdf"/>
<rect x="13" y="146" width="1" height="34" fill="#dfdfdf"/>
<rect x="13" y="180" width="105" height="1" fill="#808080"/>
<rect x="117" y="146" width="1" height="35" fill="#808080"/>
<rect x="12" y="182" width="107" height="37" fill="#c0c0c0"/>
<rect x="12" y="182" width="106" height="1" fill="#ffffff"/>
<rect x="12" y="182" width="1" height="36" fill="#ffffff"/>
<rect x="12" y="218" width="107" height="1" fill="#404040"/>
<rect x="118" y="182" width="1" height="37" fill="#404040"/>
<rect x="13" y="183" width="104" height="1" fill="#dfdfdf"/>
<rect x="13" y="183" width="1" height="34" fill="#dfdfdf"/>
<rect x="13" y="217" width="105" height="1" fill="#808080"/>
<rect x="117" y="183" width="1" height="35" fill="#808080"/>
<rect x="12" y="219" width="107" height="37" fill="#c0c0c0"/>
<rect x="12" y="219" width="106" height="1" fill="#ffffff"/>
<rect x="12" y="219" width="1" height="36" fill="#ffffff"/>
<rect x="12" y="255" width="107" height="1" fill="#404040"/>
<rect x="118" y="219" width="1" height="37" fill="#404040"/>
<rect x="13" y="220" width="104" height="1" fill="#dfdfdf"/>
<rect x="13" y="220" width="1" height="34" fill="#dfdfdf"/>
<rect x="13" y="254" width="105" height="1" fill="#808080"/>
<rect x="117" y="220" width="1" height="35" fill="#808080"/>
<rect x="12" y="256" width="107" height="37" fill="#c0c0c0"/>
<rect x="12" y="256" width="106" height="1" fill="#ffffff"/>
<rect x="12" y="256" width="1" height="36" fill="#ffffff"/>
<rect x="12" y="292" width="107" height="1" fill="#404040"/>
<rect x="118" y="256" width="1" height="37" fill="#404040"/>
<rect x="13" y="257" width="104" height="1" fill="#dfdfdf"/>
<rect x="13" y="257" width="1" height="34" fill="#dfdfdf"/>
<rect x="13" y="291" width="105" height="1" fill="#808080"/>
<rect x="117" y="257" width="1" height="35" fill="#808080"/>
<rect x="12" y="293" width="107" height="37" fill="#c0c0c0"/>
<rect x="12" y="293" width="106" height="1" fill="#ffffff"/>
<rect x="12" y="293" width="1" height="36" fill="#ffffff"/>
<rect x="12" y="329" width="107" height="1" fill="#404040"/>
<rect x="118" y="293" width="1" height="37" fill="#404040"/>
<rect x="13" y="294" width="104" height="1" fill="#dfdfdf"/>
<rect x="13" y="294" width="1" height="34" fill="#dfdfdf"/>
<rect x="13" y="328" width="105" height="1" fill="#808080"/>
<rect x="117" y="294" width="1" height="35" fill="#808080"/>
<rect x="12" y="330" width="107" height="37" fill="#c0c0c0"/>
<rect x="12" y="330" width="106" height="1" fill="#ffffff"/>
<rect x="12" y="330" width="1" height="36" fill="#ffffff"/>
<rect x="12" y="366" width="107" height="1" fill="#404040"/>
<rect x="118" y="330" width="1" height="37" fill="#404040"/>
<rect x="13" y="331" width="104" height="1" fill="#dfdfdf"/>
<rect x="13" y="331" width="1" height="34" fill="#dfdfdf"/>
<rect x="13" y="365" width="105" height="1" fill="#808080"/>
<rect x="117" y="331" width="1" height="35" fill="#808080"/>
<text x="64.5" y="98" font-size="26" fill="#000" font-weight="bold" text-anchor="middle" font-family='"Liberation Serif", serif'>K</text>
<rect x="55" y="121" width="20" height="10" fill="#c0c0c0"/>
<rect x="55" y="121" width="19" height="1" fill="#ffffff"/>
<rect x="55" y="121" width="1" height="9" fill="#ffffff"/>
<rect x="55" y="130" width="20" height="1" fill="#404040"/>
<rect x="74" y="121" width="1" height="10" fill="#404040"/>
<rect x="56" y="122" width="17" height="1" fill="#dfdfdf"/>
<rect x="56" y="122" width="1" height="7" fill="#dfdfdf"/>
<rect x="56" y="129" width="18" height="1" fill="#808080"/>
<rect x="73" y="122" width="1" height="8" fill="#808080"/>
<rect x="55" y="155" width="20" height="16" fill="#ffffff"/>
<rect x="55" y="155" width="20" height="1" fill="#808080"/>
<rect x="55" y="155" width="1" height="15" fill="#808080"/>
<rect x="55" y="170" width="20" height="1" fill="#ffffff"/>
<rect x="74" y="155" width="1" height="16" fill="#ffffff"/>
<rect x="56" y="156" width="18" height="1" fill="#404040"/>
<rect x="56" y="156" width="1" height="13" fill="#404040"/>
<rect x="56" y="169" width="18" height="1" fill="#d4d0c8"/>
<rect x="73" y="156" width="1" height="14" fill="#d4d0c8"/>
<rect x="65" y="157" width="8" height="12" fill="#a8a8a8"/>
<polygon points="68.5,158 71.5,161.5 65.5,161.5" fill="#000"/>
<polygon points="68.5,167 71.5,163.5 65.5,163.5" fill="#000"/>
<rect x="55" y="192" width="20" height="16" fill="#ffffff"/>
<rect x="55" y="192" width="20" height="1" fill="#808080"/>
<rect x="55" y="192" width="1" height="15" fill="#808080"/>
<rect x="55" y="207" width="20" height="1" fill="#ffffff"/>
<rect x="74" y="192" width="1" height="16" fill="#ffffff"/>
<rect x="56" y="193" width="18" height="1" fill="#404040"/>
<rect x="56" y="193" width="1" height="13" fill="#404040"/>
<rect x="56" y="206" width="18" height="1" fill="#d4d0c8"/>
<rect x="73" y="193" width="1" height="14" fill="#d4d0c8"/>
<text x="57" y="204" font-size="11" fill="#000" textLength="12.1" lengthAdjust="spacingAndGlyphs" font-family='"Liberation Sans", sans-serif'>Ka</text>
<rect x="71" y="195" width="1" height="10" fill="#e07030"/>
<rect x="55" y="232" width="20" height="10" fill="#ffffff"/>
<rect x="55" y="232" width="20" height="1" fill="#808080"/>
<rect x="55" y="232" width="1" height="9" fill="#808080"/>
<rect x="55" y="241" width="20" height="1" fill="#ffffff"/>
<rect x="74" y="232" width="1" height="10" fill="#ffffff"/>
<rect x="56" y="233" width="18" height="1" fill="#404040"/>
<rect x="56" y="233" width="1" height="7" fill="#404040"/>
<rect x="56" y="240" width="18" height="1" fill="#d4d0c8"/>
<rect x="73" y="233" width="1" height="8" fill="#d4d0c8"/>
<linearGradient id="pg" x1="0" x2="1"><stop offset="0" stop-color="#6e2209"/><stop offset="1" stop-color="#c87848"/></linearGradient>
<rect x="57" y="234" width="7" height="6" fill="url(#pg)"/>
<rect x="58" y="267" width="13" height="13" fill="#ffffff"/>
<rect x="58" y="267" width="13" height="1" fill="#808080"/>
<rect x="58" y="267" width="1" height="12" fill="#808080"/>
<rect x="58" y="279" width="13" height="1" fill="#ffffff"/>
<rect x="70" y="267" width="1" height="13" fill="#ffffff"/>
<rect x="59" y="268" width="11" height="1" fill="#404040"/>
<rect x="59" y="268" width="1" height="10" fill="#404040"/>
<rect x="59" y="278" width="11" height="1" fill="#d4d0c8"/>
<rect x="69" y="268" width="1" height="11" fill="#d4d0c8"/>
<path d="M61,273.5 L63.5,276.5 L67.5,270" stroke="#000" stroke-width="2" fill="none"/>
<rect x="60" y="302" width="10" height="9" fill="#c0c0c0"/>
<rect x="60" y="302" width="9" height="1" fill="#ffffff"/>
<rect x="60" y="302" width="1" height="8" fill="#ffffff"/>
<rect x="60" y="310" width="10" height="1" fill="#404040"/>
<rect x="69" y="302" width="1" height="9" fill="#404040"/>
<rect x="61" y="303" width="7" height="1" fill="#dfdfdf"/>
<rect x="61" y="303" width="1" height="6" fill="#dfdfdf"/>
<rect x="61" y="309" width="8" height="1" fill="#808080"/>
<rect x="68" y="303" width="1" height="7" fill="#808080"/>
<polygon points="64.5,304 67.5,307.5 61.5,307.5" fill="#000"/>
<rect x="60" y="312" width="10" height="9" fill="#c0c0c0"/>
<rect x="60" y="312" width="9" height="1" fill="#ffffff"/>
<rect x="60" y="312" width="1" height="8" fill="#ffffff"/>
<rect x="60" y="320" width="10" height="1" fill="#404040"/>
<rect x="69" y="312" width="1" height="9" fill="#404040"/>
<rect x="61" y="313" width="7" height="1" fill="#dfdfdf"/>
<rect x="61" y="313" width="1" height="6" fill="#dfdfdf"/>
<rect x="61" y="319" width="8" height="1" fill="#808080"/>
<rect x="68" y="313" width="1" height="7" fill="#808080"/>
<polygon points="64.5,318.5 67.5,315 61.5,315" fill="#000"/>
<rect x="55" y="343" width="20" height="1" fill="#808080"/>
<rect x="55" y="343" width="1" height="13" fill="#808080"/>
<rect x="56" y="344" width="19" height="1" fill="#ffffff"/>
<rect x="56" y="344" width="1" height="11" fill="#ffffff"/>
<rect x="55" y="354" width="20" height="1" fill="#808080"/>
<rect x="73" y="343" width="1" height="12" fill="#808080"/>
<rect x="55" y="355" width="21" height="1" fill="#ffffff"/>
<rect x="74" y="343" width="1" height="13" fill="#ffffff"/>
<rect x="58" y="340" width="12" height="7" fill="#c0c0c0"/>
<text x="59" y="346" font-size="7" fill="#000" font-weight="bold" font-family='"Liberation Sans", sans-serif'>KA</text>
<rect x="140" y="109" width="3" height="214" fill="#6e2209"/>
<rect x="500" y="109" width="3" height="214" fill="#6e2209"/>
<rect x="140" y="320" width="363" height="3" fill="#6e2209"/>
<rect x="140" y="88" width="363" height="22" fill="url(#ga)"/>
<rect x="140" y="88" width="363" height="1" fill="#6e2209"/>
<rect x="140" y="322" width="363" height="1" fill="#6e2209"/>
<rect x="140" y="88" width="1" height="235" fill="#6e2209"/>
<rect x="502" y="88" width="1" height="235" fill="#6e2209"/>
<rect x="141" y="89" width="361" height="1" fill="#b07a48"/>
<rect x="141" y="321" width="361" height="1" fill="#b07a48"/>
<rect x="141" y="89" width="1" height="233" fill="#b07a48"/>
<rect x="501" y="110" width="1" height="212" fill="#b07a48"/>
<rect x="501" y="89" width="1" height="21" fill="#f4ca9e"/>
<rect x="143" y="109" width="357" height="1" fill="#6e2209"/>
<text x="161" y="104" font-size="13" fill="#ffffff" font-weight="bold" textLength="33" lengthAdjust="spacingAndGlyphs" font-family='"Liberation Sans", sans-serif'>Form1</text>
<rect x="198" y="92" width="269" height="1" fill="#6e2209"/>
<rect x="198" y="94" width="269" height="1" fill="#6e2209"/>
<rect x="198" y="96" width="269" height="1" fill="#6e2209"/>
<rect x="198" y="98" width="269" height="1" fill="#6e2209"/>
<rect x="198" y="100" width="269" height="1" fill="#6e2209"/>
<rect x="198" y="102" width="269" height="1" fill="#6e2209"/>
<rect x="198" y="104" width="269" height="1" fill="#6e2209"/>
<rect x="198" y="106" width="269" height="1" fill="#6e2209"/>
<rect x="484" y="92" width="15" height="15" fill="#c0c0c0"/>
<rect x="484" y="92" width="14" height="1" fill="#ffffff"/>
<rect x="484" y="92" width="1" height="14" fill="#ffffff"/>
<rect x="484" y="106" width="15" height="1" fill="#404040"/>
<rect x="498" y="92" width="1" height="15" fill="#404040"/>
<rect x="485" y="93" width="12" height="1" fill="#dfdfdf"/>
<rect x="485" y="93" width="1" height="12" fill="#dfdfdf"/>
<rect x="485" y="105" width="13" height="1" fill="#808080"/>
<rect x="497" y="93" width="1" height="13" fill="#808080"/>
<rect x="469" y="92" width="15" height="15" fill="#c0c0c0"/>
<rect x="469" y="92" width="14" height="1" fill="#ffffff"/>
<rect x="469" y="92" width="1" height="14" fill="#ffffff"/>
<rect x="469" y="106" width="15" height="1" fill="#404040"/>
<rect x="483" y="92" width="1" height="15" fill="#404040"/>
<rect x="470" y="93" width="12" height="1" fill="#dfdfdf"/>
<rect x="470" y="93" width="1" height="12" fill="#dfdfdf"/>
<rect x="470" y="105" width="13" height="1" fill="#808080"/>
<rect x="482" y="93" width="1" height="13" fill="#808080"/>
<path d="M487.5,95.5 L494.5,102.5 M494.5,95.5 L487.5,102.5" stroke="#000" stroke-width="2"/>
<polygon points="472.5,98 479.5,98 476,101.5" fill="#000"/>
<rect x="145" y="94" width="12" height="12" fill="#000000" rx="1"/>
<rect x="146" y="95" width="10" height="1" fill="#d88850"/>
<rect x="146" y="97" width="10" height="8" fill="#ffffff"/>
<rect x="143" y="110" width="357" height="210" fill="#c0c0c0"/>
<rect x="143" y="110" width="357" height="210" fill="url(#dots)"/>
<rect x="153" y="120" width="166" height="161" fill="#ffffff"/>
<rect x="153" y="120" width="166" height="1" fill="#808080"/>
<rect x="153" y="120" width="1" height="160" fill="#808080"/>
<rect x="153" y="280" width="166" height="1" fill="#ffffff"/>
<rect x="318" y="120" width="1" height="161" fill="#ffffff"/>
<rect x="154" y="121" width="164" height="1" fill="#404040"/>
<rect x="154" y="121" width="1" height="158" fill="#404040"/>
<rect x="154" y="279" width="164" height="1" fill="#d4d0c8"/>
<rect x="317" y="121" width="1" height="159" fill="#d4d0c8"/>
<rect x="155" y="122" width="147" height="142" fill="#ffffff"/>
<rect x="157" y="122" width="140" height="14" fill="#e4e4e4"/>
<text x="157" y="133" font-size="12.5" fill="#000" letter-spacing="-0.500" font-family='"Liberation Mono", monospace'>Welcome to Serenity!</text>
<rect x="302" y="122" width="15" height="142" fill="#d4d0c8"/>
<rect x="302" y="122" width="15" height="16" fill="#c0c0c0"/>
<rect x="302" y="122" width="14" height="1" fill="#ffffff"/>
<rect x="302" y="122" width="1" height="15" fill="#ffffff"/>
<rect x="302" y="137" width="15" height="1" fill="#404040"/>
<rect x="316" y="122" width="1" height="16" fill="#404040"/>
<rect x="303" y="123" width="12" height="1" fill="#dfdfdf"/>
<rect x="303" y="123" width="1" height="13" fill="#dfdfdf"/>
<rect x="303" y="136" width="13" height="1" fill="#808080"/>
<rect x="315" y="123" width="1" height="14" fill="#808080"/>
<polygon points="309.5,126 313,129.5 311,129.5 311,133 308,133 308,129.5 306,129.5" fill="#808080"/>
<rect x="302" y="248" width="15" height="16" fill="#c0c0c0"/>
<rect x="302" y="248" width="14" height="1" fill="#ffffff"/>
<rect x="302" y="248" width="1" height="15" fill="#ffffff"/>
<rect x="302" y="263" width="15" height="1" fill="#404040"/>
<rect x="316" y="248" width="1" height="16" fill="#404040"/>
<rect x="303" y="249" width="12" height="1" fill="#dfdfdf"/>
<rect x="303" y="249" width="1" height="13" fill="#dfdfdf"/>
<rect x="303" y="262" width="13" height="1" fill="#808080"/>
<rect x="315" y="249" width="1" height="14" fill="#808080"/>
<polygon points="309.5,259 313,255.5 311,255.5 311,252 308,252 308,255.5 306,255.5" fill="#808080"/>
<rect x="155" y="264" width="147" height="15" fill="#d4d0c8"/>
<rect x="155" y="264" width="16" height="15" fill="#c0c0c0"/>
<rect x="155" y="264" width="15" height="1" fill="#ffffff"/>
<rect x="155" y="264" width="1" height="14" fill="#ffffff"/>
<rect x="155" y="278" width="16" height="1" fill="#404040"/>
<rect x="170" y="264" width="1" height="15" fill="#404040"/>
<rect x="156" y="265" width="13" height="1" fill="#dfdfdf"/>
<rect x="156" y="265" width="1" height="12" fill="#dfdfdf"/>
<rect x="156" y="277" width="14" height="1" fill="#808080"/>
<rect x="169" y="265" width="1" height="13" fill="#808080"/>
<polygon points="159,271.5 162.5,268 162.5,270 166,270 166,273 162.5,273 162.5,275" fill="#808080"/>
<rect x="286" y="264" width="16" height="15" fill="#c0c0c0"/>
<rect x="286" y="264" width="15" height="1" fill="#ffffff"/>
<rect x="286" y="264" width="1" height="14" fill="#ffffff"/>
<rect x="286" y="278" width="16" height="1" fill="#404040"/>
<rect x="301" y="264" width="1" height="15" fill="#404040"/>
<rect x="287" y="265" width="13" height="1" fill="#dfdfdf"/>
<rect x="287" y="265" width="1" height="12" fill="#dfdfdf"/>
<rect x="287" y="277" width="14" height="1" fill="#808080"/>
<rect x="300" y="265" width="1" height="13" fill="#808080"/>
<polygon points="297,271.5 293.5,268 293.5,270 290,270 290,273 293.5,273 293.5,275" fill="#808080"/>
<rect x="302" y="264" width="15" height="15" fill="#c0c0c0"/>
<rect x="323" y="115" width="166" height="166" fill="#c0c0c0"/>
<rect x="323" y="120" width="165" height="1" fill="#808080"/>
<rect x="324" y="121" width="164" height="1" fill="#ffffff"/>
<rect x="323" y="120" width="1" height="160" fill="#808080"/>
<rect x="324" y="121" width="1" height="158" fill="#ffffff"/>
<rect x="323" y="279" width="165" height="1" fill="#808080"/>
<rect x="323" y="280" width="166" height="1" fill="#ffffff"/>
<rect x="487" y="120" width="1" height="160" fill="#808080"/>
<rect x="488" y="120" width="1" height="161" fill="#ffffff"/>
<rect x="328" y="112" width="51" height="15" fill="#c0c0c0"/>
<text x="330" y="124" font-size="12.5" fill="#000" textLength="45" lengthAdjust="spacingAndGlyphs" font-family='"Liberation Sans", sans-serif'>Features</text>
<rect x="333" y="136" width="13" height="13" fill="#ffffff"/>
<rect x="333" y="136" width="13" height="1" fill="#808080"/>
<rect x="333" y="136" width="1" height="12" fill="#808080"/>
<rect x="333" y="148" width="13" height="1" fill="#ffffff"/>
<rect x="345" y="136" width="1" height="13" fill="#ffffff"/>
<rect x="334" y="137" width="11" height="1" fill="#404040"/>
<rect x="334" y="137" width="1" height="10" fill="#404040"/>
<rect x="334" y="147" width="11" height="1" fill="#d4d0c8"/>
<rect x="344" y="137" width="1" height="11" fill="#d4d0c8"/>
<path d="M336,142.5 L338.5,145.5 L342.5,139" stroke="#000" stroke-width="2" fill="none"/>
<text x="350" y="147" font-size="12.5" fill="#000" textLength="105" lengthAdjust="spacingAndGlyphs" font-family='"Liberation Sans", sans-serif'>Familiar look &amp; feel</text>
<rect x="333" y="156" width="13" height="13" fill="#ffffff"/>
<rect x="333" y="156" width="13" height="1" fill="#808080"/>
<rect x="333" y="156" width="1" height="12" fill="#808080"/>
<rect x="333" y="168" width="13" height="1" fill="#ffffff"/>
<rect x="345" y="156" width="1" height="13" fill="#ffffff"/>
<rect x="334" y="157" width="11" height="1" fill="#404040"/>
<rect x="334" y="157" width="1" height="10" fill="#404040"/>
<rect x="334" y="167" width="11" height="1" fill="#d4d0c8"/>
<rect x="344" y="157" width="1" height="11" fill="#d4d0c8"/>
<path d="M336,162.5 L338.5,165.5 L342.5,159" stroke="#000" stroke-width="2" fill="none"/>
<text x="350" y="167" font-size="12.5" fill="#000" textLength="76" lengthAdjust="spacingAndGlyphs" font-family='"Liberation Sans", sans-serif'>Unix-like core</text>
<rect x="333" y="176" width="13" height="13" fill="#ffffff"/>
<rect x="333" y="176" width="13" height="1" fill="#808080"/>
<rect x="333" y="176" width="1" height="12" fill="#808080"/>
<rect x="333" y="188" width="13" height="1" fill="#ffffff"/>
<rect x="345" y="176" width="1" height="13" fill="#ffffff"/>
<rect x="334" y="177" width="11" height="1" fill="#404040"/>
<rect x="334" y="177" width="1" height="10" fill="#404040"/>
<rect x="334" y="187" width="11" height="1" fill="#d4d0c8"/>
<rect x="344" y="177" width="1" height="11" fill="#d4d0c8"/>
<path d="M336,182.5 L338.5,185.5 L342.5,179" stroke="#000" stroke-width="2" fill="none"/>
<text x="350" y="187" font-size="12.5" fill="#000" textLength="61" lengthAdjust="spacingAndGlyphs" font-family='"Liberation Sans", sans-serif'>Modern C++</text>
<rect x="321" y="113" width="5" height="5" fill="#000"/>
<rect x="321" y="278" width="5" height="5" fill="#000"/>
<rect x="404" y="113" width="5" height="5" fill="#000"/>
<rect x="404" y="278" width="5" height="5" fill="#000"/>
<rect x="486" y="113" width="5" height="5" fill="#000"/>
<rect x="486" y="278" width="5" height="5" fill="#000"/>
<rect x="321" y="196" width="5" height="5" fill="#000"/>
<rect x="486" y="196" width="5" height="5" fill="#000"/>
<rect x="323" y="285" width="81" height="21" fill="#c0c0c0"/>
<rect x="323" y="285" width="80" height="1" fill="#ffffff"/>
<rect x="323" y="285" width="1" height="20" fill="#ffffff"/>
<rect x="323" y="305" width="81" height="1" fill="#404040"/>
<rect x="403" y="285" width="1" height="21" fill="#404040"/>
<rect x="324" y="286" width="78" height="1" fill="#dfdfdf"/>
<rect x="324" y="286" width="1" height="18" fill="#dfdfdf"/>
<rect x="324" y="304" width="79" height="1" fill="#808080"/>
<rect x="402" y="286" width="1" height="19" fill="#808080"/>
<text x="363" y="299" font-size="12.5" fill="#000" text-anchor="middle" textLength="37" lengthAdjust="spacingAndGlyphs" font-family='"Liberation Sans", sans-serif'>Cancel</text>
<rect x="408" y="285" width="81" height="21" fill="#c0c0c0"/>
<rect x="408" y="285" width="80" height="1" fill="#ffffff"/>
<rect x="408" y="285" width="1" height="20" fill="#ffffff"/>
<rect x="408" y="305" width="81" height="1" fill="#404040"/>
<rect x="488" y="285" width="1" height="21" fill="#404040"/>
<rect x="409" y="286" width="78" height="1" fill="#dfdfdf"/>
<rect x="409" y="286" width="1" height="18" fill="#dfdfdf"/>
<rect x="409" y="304" width="79" height="1" fill="#808080"/>
<rect x="487" y="286" width="1" height="19" fill="#808080"/>
<text x="448" y="299" font-size="12.5" fill="#000" text-anchor="middle" textLength="15" lengthAdjust="spacingAndGlyphs" font-family='"Liberation Sans", sans-serif'>OK</text>
<rect x="543" y="93" width="3" height="284" fill="#888888"/>
<rect x="787" y="93" width="3" height="284" fill="#888888"/>
<rect x="543" y="374" width="247" height="3" fill="#888888"/>
<rect x="543" y="72" width="247" height="22" fill="url(#gi)"/>
<rect x="543" y="72" width="247" height="1" fill="#a0a0a0"/>
<rect x="543" y="72" width="1" height="305" fill="#a0a0a0"/>
<rect x="546" y="93" width="241" height="1" fill="#808080"/>
<text x="564" y="88" font-size="13" fill="#d5d0c7" font-weight="bold" textLength="65" lengthAdjust="spacingAndGlyphs" font-family='"Liberation Sans", sans-serif'>Properties</text>
<rect x="633" y="76" width="121" height="1" fill="#808080"/>
<rect x="633" y="78" width="121" height="1" fill="#808080"/>
<rect x="633" y="80" width="121" height="1" fill="#808080"/>
<rect x="633" y="82" width="121" height="1" fill="#808080"/>
<rect x="633" y="84" width="121" height="1" fill="#808080"/>
<rect x="633" y="86" width="121" height="1" fill="#808080"/>
<rect x="633" y="88" width="121" height="1" fill="#808080"/>
<rect x="633" y="90" width="121" height="1" fill="#808080"/>
<rect x="771" y="76" width="15" height="15" fill="#c0c0c0"/>
<rect x="771" y="76" width="14" height="1" fill="#ffffff"/>
<rect x="771" y="76" width="1" height="14" fill="#ffffff"/>
<rect x="771" y="90" width="15" height="1" fill="#404040"/>
<rect x="785" y="76" width="1" height="15" fill="#404040"/>
<rect x="772" y="77" width="12" height="1" fill="#dfdfdf"/>
<rect x="772" y="77" width="1" height="12" fill="#dfdfdf"/>
<rect x="772" y="89" width="13" height="1" fill="#808080"/>
<rect x="784" y="77" width="1" height="13" fill="#808080"/>
<rect x="756" y="76" width="15" height="15" fill="#c0c0c0"/>
<rect x="756" y="76" width="14" height="1" fill="#ffffff"/>
<rect x="756" y="76" width="1" height="14" fill="#ffffff"/>
<rect x="756" y="90" width="15" height="1" fill="#404040"/>
<rect x="770" y="76" width="1" height="15" fill="#404040"/>
<rect x="757" y="77" width="12" height="1" fill="#dfdfdf"/>
<rect x="757" y="77" width="1" height="12" fill="#dfdfdf"/>
<rect x="757" y="89" width="13" height="1" fill="#808080"/>
<rect x="769" y="77" width="1" height="13" fill="#808080"/>
<path d="M774.5,79.5 L781.5,86.5 M781.5,79.5 L774.5,86.5" stroke="#000" stroke-width="2"/>
<polygon points="759.5,82 766.5,82 763,85.5" fill="#000"/>
<rect x="548" y="78" width="12" height="12" fill="#000000" rx="1"/>
<rect x="549" y="79" width="10" height="1" fill="#d88850"/>
<rect x="549" y="81" width="10" height="8" fill="#ffffff"/>
<rect x="546" y="94" width="241" height="280" fill="#c0c0c0"/>
<rect x="546" y="94" width="241" height="280" fill="#ffffff"/>
<rect x="546" y="94" width="241" height="1" fill="#808080"/>
<rect x="546" y="94" width="1" height="279" fill="#808080"/>
<rect x="546" y="373" width="241" height="1" fill="#ffffff"/>
<rect x="786" y="94" width="1" height="280" fill="#ffffff"/>
<rect x="547" y="95" width="239" height="1" fill="#404040"/>
<rect x="547" y="95" width="1" height="277" fill="#404040"/>
<rect x="547" y="372" width="239" height="1" fill="#d4d0c8"/>
<rect x="785" y="95" width="1" height="278" fill="#d4d0c8"/>
<rect x="548" y="96" width="222" height="14" fill="#ffffff"/>
<text x="550.5" y="106" font-size="12" fill="#000" font-weight="bold" textLength="33" lengthAdjust="spacingAndGlyphs" font-family='"Liberation Sans", sans-serif'>class</text>
<text x="670.5" y="106" font-size="12.5" fill="#808080" textLength="54" lengthAdjust="spacingAndGlyphs" font-family='"Liberation Sans", sans-serif'>GGroupBox</text>
<rect x="548" y="110" width="222" height="16" fill="#d2d2d2"/>
<text x="550.5" y="122" font-size="12" fill="#000" font-weight="bold" textLength="33" lengthAdjust="spacingAndGlyphs" font-family='"Liberation Sans", sans-serif'>width</text>
<text x="670.5" y="122" font-size="12.5" fill="#000" textLength="18.5" lengthAdjust="spacingAndGlyphs" font-family='"Liberation Sans", sans-serif'>166</text>
<rect x="548" y="126" width="222" height="16" fill="#ffffff"/>
<text x="550.5" y="138" font-size="12" fill="#000" font-weight="bold" textLength="39" lengthAdjust="spacingAndGlyphs" font-family='"Liberation Sans", sans-serif'>height</text>
<text x="670.5" y="138" font-size="12.5" fill="#000" textLength="18.5" lengthAdjust="spacingAndGlyphs" font-family='"Liberation Sans", sans-serif'>166</text>
<rect x="548" y="142" width="222" height="16" fill="#d2d2d2"/>
<text x="550.5" y="154" font-size="12" fill="#000" font-weight="bold" textLength="7" lengthAdjust="spacingAndGlyphs" font-family='"Liberation Sans", sans-serif'>x</text>
<text x="670.5" y="154" font-size="12.5" fill="#000" textLength="18.5" lengthAdjust="spacingAndGlyphs" font-family='"Liberation Sans", sans-serif'>180</text>
<rect x="548" y="158" width="222" height="16" fill="#ffffff"/>
<text x="550.5" y="170" font-size="12" fill="#000" font-weight="bold" textLength="7" lengthAdjust="spacingAndGlyphs" font-family='"Liberation Sans", sans-serif'>y</text>
<text x="670.5" y="170" font-size="12.5" fill="#000" font-family='"Liberation Sans", sans-serif'>5</text>
<rect x="548" y="174" width="222" height="16" fill="#d2d2d2"/>
<text x="550.5" y="186" font-size="12" fill="#000" font-weight="bold" textLength="43" lengthAdjust="spacingAndGlyphs" font-family='"Liberation Sans", sans-serif'>visible</text>
<text x="670.5" y="186" font-size="12.5" fill="#000" textLength="22" lengthAdjust="spacingAndGlyphs" font-family='"Liberation Sans", sans-serif'>true</text>
<rect x="548" y="190" width="222" height="16" fill="#ffffff"/>
<text x="550.5" y="202" font-size="12" fill="#000" font-weight="bold" textLength="47" lengthAdjust="spacingAndGlyphs" font-family='"Liberation Sans", sans-serif'>enabled</text>
<text x="670.5" y="202" font-size="12.5" fill="#000" textLength="22" lengthAdjust="spacingAndGlyphs" font-family='"Liberation Sans", sans-serif'>true</text>
<rect x="548" y="206" width="222" height="16" fill="#d2d2d2"/>
<text x="550.5" y="218" font-size="12" fill="#000" font-weight="bold" textLength="43" lengthAdjust="spacingAndGlyphs" font-family='"Liberation Sans", sans-serif'>tooltip</text>
<rect x="548" y="222" width="222" height="16" fill="#ffffff"/>
<text x="550.5" y="234" font-size="12" fill="#000" font-weight="bold" textLength="60" lengthAdjust="spacingAndGlyphs" font-family='"Liberation Sans", sans-serif'>backcolor</text>
<text x="670.5" y="234" font-size="12.5" fill="#000" textLength="53" lengthAdjust="spacingAndGlyphs" font-family='"Liberation Sans", sans-serif'>#c0c0c0ff</text>
<rect x="548" y="238" width="222" height="16" fill="#d2d2d2"/>
<text x="550.5" y="250" font-size="12" fill="#000" font-weight="bold" textLength="58" lengthAdjust="spacingAndGlyphs" font-family='"Liberation Sans", sans-serif'>forecolor</text>
<text x="670.5" y="250" font-size="12.5" fill="#000" textLength="53" lengthAdjust="spacingAndGlyphs" font-family='"Liberation Sans", sans-serif'>#000000ff</text>
<rect x="548" y="254" width="222" height="16" fill="#ffffff"/>
<text x="550.5" y="266" font-size="12" fill="#000" font-weight="bold" textLength="48" lengthAdjust="spacingAndGlyphs" font-family='"Liberation Sans", sans-serif'>autofill</text>
<text x="670.5" y="266" font-size="12.5" fill="#000" textLength="22" lengthAdjust="spacingAndGlyphs" font-family='"Liberation Sans", sans-serif'>true</text>
<rect x="548" y="270" width="222" height="16" fill="#606060"/>
<text x="550.5" y="282" font-size="12" fill="#fff" font-weight="bold" textLength="29" lengthAdjust="spacingAndGlyphs" font-family='"Liberation Sans", sans-serif'>name</text>
<text x="670.5" y="282" font-size="12.5" fill="#ffffff" textLength="46" lengthAdjust="spacingAndGlyphs" font-family='"Liberation Sans", sans-serif'>Features</text>
<rect x="770" y="96" width="15" height="261" fill="#d4d0c8"/>
<rect x="770" y="96" width="15" height="16" fill="#c0c0c0"/>
<rect x="770" y="96" width="14" height="1" fill="#ffffff"/>
<rect x="770" y="96" width="1" height="15" fill="#ffffff"/>
<rect x="770" y="111" width="15" height="1" fill="#404040"/>
<rect x="784" y="96" width="1" height="16" fill="#404040"/>
<rect x="771" y="97" width="12" height="1" fill="#dfdfdf"/>
<rect x="771" y="97" width="1" height="13" fill="#dfdfdf"/>
<rect x="771" y="110" width="13" height="1" fill="#808080"/>
<rect x="783" y="97" width="1" height="14" fill="#808080"/>
<polygon points="777.5,100 781,103.5 779,103.5 779,107 776,107 776,103.5 774,103.5" fill="#808080"/>
<rect x="770" y="341" width="15" height="16" fill="#c0c0c0"/>
<rect x="770" y="341" width="14" height="1" fill="#ffffff"/>
<rect x="770" y="341" width="1" height="15" fill="#ffffff"/>
<rect x="770" y="356" width="15" height="1" fill="#404040"/>
<rect x="784" y="341" width="1" height="16" fill="#404040"/>
<rect x="771" y="342" width="12" height="1" fill="#dfdfdf"/>
<rect x="771" y="342" width="1" height="13" fill="#dfdfdf"/>
<rect x="771" y="355" width="13" height="1" fill="#808080"/>
<rect x="783" y="342" width="1" height="14" fill="#808080"/>
<polygon points="777.5,352 781,348.5 779,348.5 779,345 776,345 776,348.5 774,348.5" fill="#808080"/>
<rect x="548" y="357" width="222" height="15" fill="#d4d0c8"/>
<rect x="548" y="357" width="16" height="15" fill="#c0c0c0"/>
<rect x="548" y="357" width="15" height="1" fill="#ffffff"/>
<rect x="548" y="357" width="1" height="14" fill="#ffffff"/>
<rect x="548" y="371" width="16" height="1" fill="#404040"/>
<rect x="563" y="357" width="1" height="15" fill="#404040"/>
<rect x="549" y="358" width="13" height="1" fill="#dfdfdf"/>
<rect x="549" y="358" width="1" height="12" fill="#dfdfdf"/>
<rect x="549" y="370" width="14" height="1" fill="#808080"/>
<rect x="562" y="358" width="1" height="13" fill="#808080"/>
<polygon points="552,364.5 555.5,361 555.5,363 559,363 559,366 555.5,366 555.5,368" fill="#808080"/>
<rect x="754" y="357" width="16" height="15" fill="#c0c0c0"/>
<rect x="754" y="357" width="15" height="1" fill="#ffffff"/>
<rect x="754" y="357" width="1" height="14" fill="#ffffff"/>
<rect x="754" y="371" width="16" height="1" fill="#404040"/>
<rect x="769" y="357" width="1" height="15" fill="#404040"/>
<rect x="755" y="358" width="13" height="1" fill="#dfdfdf"/>
<rect x="755" y="358" width="1" height="12" fill="#dfdfdf"/>
<rect x="755" y="370" width="14" height="1" fill="#808080"/>
<rect x="768" y="358" width="1" height="13" fill="#808080"/>
<polygon points="765,364.5 761.5,361 761.5,363 758,363 758,366 761.5,366 761.5,368" fill="#808080"/>
<rect x="770" y="357" width="15" height="15" fill="#c0c0c0"/>
<rect x="834" y="50" width="3" height="379" fill="#888888"/>
<rect x="1274" y="50" width="3" height="379" fill="#888888"/>
<rect x="834" y="426" width="443" height="3" fill="#888888"/>
<rect x="834" y="29" width="443" height="22" fill="url(#gi)"/>
<rect x="834" y="29" width="443" height="1" fill="#a0a0a0"/>
<rect x="834" y="29" width="1" height="400" fill="#a0a0a0"/>
<rect x="837" y="50" width="437" height="1" fill="#808080"/>
<text x="855" y="45" font-size="13" fill="#d5d0c7" font-weight="bold" textLength="96" lengthAdjust="spacingAndGlyphs" font-family='"Liberation Sans", sans-serif'>ProcessManager</text>
<rect x="955" y="33" width="286" height="1" fill="#808080"/>
<rect x="955" y="35" width="286" height="1" fill="#808080"/>
<rect x="955" y="37" width="286" height="1" fill="#808080"/>
<rect x="955" y="39" width="286" height="1" fill="#808080"/>
<rect x="955" y="41" width="286" height="1" fill="#808080"/>
<rect x="955" y="43" width="286" height="1" fill="#808080"/>
<rect x="955" y="45" width="286" height="1" fill="#808080"/>
<rect x="955" y="47" width="286" height="1" fill="#808080"/>
<rect x="1258" y="33" width="15" height="15" fill="#c0c0c0"/>
<rect x="1258" y="33" width="14" height="1" fill="#ffffff"/>
<rect x="1258" y="33" width="1" height="14" fill="#ffffff"/>
<rect x="1258" y="47" width="15" height="1" fill="#404040"/>
<rect x="1272" y="33" width="1" height="15" fill="#404040"/>
<rect x="1259" y="34" width="12" height="1" fill="#dfdfdf"/>
<rect x="1259" y="34" width="1" height="12" fill="#dfdfdf"/>
<rect x="1259" y="46" width="13" height="1" fill="#808080"/>
<rect x="1271" y="34" width="1" height="13" fill="#808080"/>
<rect x="1243" y="33" width="15" height="15" fill="#c0c0c0"/>
<rect x="1243" y="33" width="14" height="1" fill="#ffffff"/>
<rect x="1243" y="33" width="1" height="14" fill="#ffffff"/>
<rect x="1243" y="47" width="15" height="1" fill="#404040"/>
<rect x="1257" y="33" width="1" height="15" fill="#404040"/>
<rect x="1244" y="34" width="12" height="1" fill="#dfdfdf"/>
<rect x="1244" y="34" width="1" height="12" fill="#dfdfdf"/>
<rect x="1244" y="46" width="13" height="1" fill="#808080"/>
<rect x="1256" y="34" width="1" height="13" fill="#808080"/>
<path d="M1261.5,36.5 L1268.5,43.5 M1268.5,36.5 L1261.5,43.5" stroke="#000" stroke-width="2"/>
<polygon points="1246.5,39 1253.5,39 1250,42.5" fill="#000"/>
<rect x="838" y="34" width="14" height="14" fill="#000000" rx="2"/>
<rect x="840" y="37" width="1" height="1" fill="#1a8a2a"/>
<rect x="840" y="44" width="1" height="1" fill="#1a8a2a"/>
<rect x="842" y="37" width="1" height="1" fill="#1a8a2a"/>
<rect x="842" y="44" width="1" height="1" fill="#1a8a2a"/>
<rect x="844" y="37" width="1" height="1" fill="#1a8a2a"/>
<rect x="844" y="44" width="1" height="1" fill="#1a8a2a"/>
<rect x="846" y="37" width="1" height="1" fill="#1a8a2a"/>
<rect x="846" y="44" width="1" height="1" fill="#1a8a2a"/>
<rect x="848" y="37" width="1" height="1" fill="#1a8a2a"/>
<rect x="848" y="44" width="1" height="1" fill="#1a8a2a"/>
<rect x="850" y="37" width="1" height="1" fill="#1a8a2a"/>
<rect x="850" y="44" width="1" height="1" fill="#1a8a2a"/>
<polyline points="839,41.5 842.5,41.5 844,37.5 846,44 848,41.5 851,41.5" fill="none" stroke="#40e060" stroke-width="1.2"/>
<rect x="837" y="51" width="437" height="375" fill="#c0c0c0"/>
<rect x="837" y="51" width="437" height="1" fill="#ffffff"/>
<path d="M844,72 L848.5,67.5" stroke="#6a3810" stroke-width="3.2" stroke-linecap="round"/>
<path d="M848,68 L857.5,58.5" stroke="#b4b4b4" stroke-width="3"/>
<path d="M851.5,73 L852,70 L854,69.5 L854.5,67 L856.5,66 L856,63.5 L858,61.5 L857.5,59 L859,57" stroke="#c01818" stroke-width="2" fill="none"/>
<path d="M870.5,63 L870.5,59 Q871.5,57.5 872.5,59 L872.5,62 L872.5,58 Q873.5,56.5 874.5,58 L874.5,62 L874.5,58.5 Q875.5,57 876.5,58.5 L876.5,62.5 L876.5,60 Q877.5,58.5 878.5,60 L879,66 Q880,68 878.5,71 Q877,73.5 873.5,73.5 Q870.5,73.5 869.5,70 L868.5,67 Q868.5,65.5 870.5,66 Z" fill="#dcbcb4" stroke="#a87c74" stroke-width="0.9"/>
<path d="M892.5,66.5 L895.5,66 L896,59.5 Q897,57.5 898,59.5 L898.5,63.5 L903.5,63.5 Q904.5,64 904.5,65 L904.5,71 Q904.5,72.5 903,72.5 L894,72.5 Q892.5,72.5 892.5,71 Z" fill="#dcbcb4" stroke="#a87c74" stroke-width="0.9"/>
<rect x="837" y="78" width="437" height="1" fill="#808080"/>
<rect x="837" y="79" width="437" height="275" fill="#ffffff"/>
<rect x="837" y="79" width="437" height="1" fill="#808080"/>
<rect x="837" y="79" width="1" height="274" fill="#808080"/>
<rect x="837" y="353" width="437" height="1" fill="#ffffff"/>
<rect x="1273" y="79" width="1" height="275" fill="#ffffff"/>
<rect x="838" y="80" width="435" height="1" fill="#404040"/>
<rect x="838" y="80" width="1" height="272" fill="#404040"/>
<rect x="838" y="352" width="435" height="1" fill="#d4d0c8"/>
<rect x="1272" y="80" width="1" height="273" fill="#d4d0c8"/>
<rect x="839" y="81" width="24" height="13" fill="#c0c0c0"/>
<rect x="862" y="81" width="1" height="13" fill="#808080"/>
<rect x="863" y="81" width="150" height="13" fill="#c0c0c0"/>
<rect x="863" y="81" width="1" height="13" fill="#ffffff"/>
<rect x="1012" y="81" width="1" height="13" fill="#808080"/>
<rect x="1013" y="81" width="35" height="13" fill="#d8d8d8"/>
<rect x="1013" y="81" width="1" height="13" fill="#ffffff"/>
<rect x="1047" y="81" width="1" height="13" fill="#808080"/>
<rect x="1048" y="81" width="85" height="13" fill="#c0c0c0"/>
<rect x="1048" y="81" width="1" height="13" fill="#ffffff"/>
<rect x="1132" y="81" width="1" height="13" fill="#808080"/>
<rect x="1133" y="81" width="26" height="13" fill="#c0c0c0"/>
<rect x="1133" y="81" width="1" height="13" fill="#ffffff"/>
<rect x="1158" y="81" width="1" height="13" fill="#808080"/>
<rect x="1159" y="81" width="60" height="13" fill="#c0c0c0"/>
<rect x="1159" y="81" width="1" height="13" fill="#ffffff"/>
<rect x="1218" y="81" width="1" height="13" fill="#808080"/>
<rect x="1219" y="81" width="35" height="13" fill="#c0c0c0"/>
<rect x="1219" y="81" width="1" height="13" fill="#ffffff"/>
<rect x="1253" y="81" width="1" height="13" fill="#808080"/>
<rect x="1254" y="81" width="3" height="13" fill="#c0c0c0"/>
<rect x="1254" y="81" width="1" height="13" fill="#ffffff"/>
<rect x="1256" y="81" width="1" height="13" fill="#808080"/>
<rect x="839" y="94" width="418" height="1" fill="#808080"/>
<text x="868" y="91" font-size="12" fill="#000" font-weight="bold" textLength="29" lengthAdjust="spacingAndGlyphs" font-family='"Liberation Sans", sans-serif'>Name</text>
<text x="1018" y="91" font-size="12" fill="#000" font-weight="bold" textLength="22" lengthAdjust="spacingAndGlyphs" font-family='"Liberation Sans", sans-serif'>CPU</text>
<text x="1053" y="91" font-size="12" fill="#000" font-weight="bold" textLength="32" lengthAdjust="spacingAndGlyphs" font-family='"Liberation Sans", sans-serif'>State</text>
<text x="1138" y="91" font-size="12" fill="#000" font-weight="bold" textLength="14" lengthAdjust="spacingAndGlyphs" font-family='"Liberation Sans", sans-serif'>Pr</text>
<text x="1163" y="91" font-size="12" fill="#000" font-weight="bold" textLength="28" lengthAdjust="spacingAndGlyphs" font-family='"Liberation Sans", sans-serif'>User</text>
<text x="1223" y="91" font-size="12" fill="#000" font-weight="bold" textLength="21" lengthAdjust="spacingAndGlyphs" font-family='"Liberation Sans", sans-serif'>PID</text>
<rect x="839" y="95" width="418" height="16" fill="#ffffff"/>
<rect x="1013" y="95" width="35" height="16" fill="#d4d4d4"/>
<polygon points="857.36,101.54 857.5,103.0 855.69,104.13 855.36,105.22 856.24,107.17 855.3,108.3 853.22,107.82 852.22,108.36 851.46,110.36 850.0,110.5 848.87,108.69 847.78,108.36 845.83,109.24 844.7,108.3 845.18,106.22 844.64,105.22 842.64,104.46 842.5,103.0 844.31,101.87 844.64,100.78 843.76,98.83 844.7,97.7 846.78,98.18 847.78,97.64 848.54,95.64 850.0,95.5 851.13,97.31 852.22,97.64 854.17,96.76 855.3,97.7 854.82,99.78 855.36,100.78" fill="#a4a4a4" stroke="#000" stroke-width="1.1"/>
<circle cx="850" cy="103" r="2.2" fill="#fff" stroke="#000" stroke-width="1"/>
<text x="868" y="107" font-size="12.5" fill="#000" textLength="73.2" lengthAdjust="spacingAndGlyphs" font-family='"Liberation Sans", sans-serif'>WindowServer</text>
<text x="1043" y="107" font-size="12.5" fill="#000" text-anchor="end" font-family='"Liberation Sans", sans-serif'>0</text>
<text x="1053" y="107" font-size="12.5" fill="#000" textLength="31.3" lengthAdjust="spacingAndGlyphs" font-family='"Liberation Sans", sans-serif'>Select</text>
<polygon points="1145.5,98 1150,103 1147,103 1147,107 1144,107 1144,103 1141,103" fill="#107010"/>
<text x="1163" y="107" font-size="12.5" fill="#000" textLength="25.0" lengthAdjust="spacingAndGlyphs" font-family='"Liberation Sans", sans-serif'>anon</text>
<text x="1248" y="107" font-size="12.5" fill="#000" text-anchor="end" font-family='"Liberation Sans", sans-serif'>6</text>
<rect x="839" y="111" width="418" height="16" fill="#d2d2d2"/>
<rect x="1013" y="111" width="35" height="16" fill="#b4b4b4"/>
<polygon points="857.36,117.54 857.5,119.0 855.69,120.13 855.36,121.22 856.24,123.17 855.3,124.3 853.22,123.82 852.22,124.36 851.46,126.36 850.0,126.5 848.87,124.69 847.78,124.36 845.83,125.24 844.7,124.3 845.18,122.22 844.64,121.22 842.64,120.46 842.5,119.0 844.31,117.87 844.64,116.78 843.76,114.83 844.7,113.7 846.78,114.18 847.78,113.64 848.54,111.64 850.0,111.5 851.13,113.31 852.22,113.64 854.17,112.76 855.3,113.7 854.82,115.78 855.36,116.78" fill="#a4a4a4" stroke="#000" stroke-width="1.1"/>
<circle cx="850" cy="119" r="2.2" fill="#fff" stroke="#000" stroke-width="1"/>
<text x="868" y="123" font-size="12.5" fill="#000" textLength="85.0" lengthAdjust="spacingAndGlyphs" font-family='"Liberation Sans", sans-serif'>ProcessManager</text>
<text x="1043" y="123" font-size="12.5" fill="#000" text-anchor="end" font-family='"Liberation Sans", sans-serif'>0</text>
<text x="1053" y="123" font-size="12.5" fill="#000" textLength="41.9" lengthAdjust="spacingAndGlyphs" font-family='"Liberation Sans", sans-serif'>Running</text>
<circle cx="1145.5" cy="118.5" r="2.6" fill="#3a70c0"/>
<text x="1163" y="123" font-size="12.5" fill="#000" textLength="25.0" lengthAdjust="spacingAndGlyphs" font-family='"Liberation Sans", sans-serif'>anon</text>
<text x="1248" y="123" font-size="12.5" fill="#000" text-anchor="end" textLength="11.7" lengthAdjust="spacingAndGlyphs" font-family='"Liberation Sans", sans-serif'>11</text>
<rect x="839" y="127" width="418" height="16" fill="#ffffff"/>
<rect x="1013" y="127" width="35" height="16" fill="#d4d4d4"/>
<polygon points="857.36,133.54 857.5,135.0 855.69,136.13 855.36,137.22 856.24,139.17 855.3,140.3 853.22,139.82 852.22,140.36 851.46,142.36 850.0,142.5 848.87,140.69 847.78,140.36 845.83,141.24 844.7,140.3 845.18,138.22 844.64,137.22 842.64,136.46 842.5,135.0 844.31,133.87 844.64,132.78 843.76,130.83 844.7,129.7 846.78,130.18 847.78,129.64 848.54,127.64 850.0,127.5 851.13,129.31 852.22,129.64 854.17,128.76 855.3,129.7 854.82,131.78 855.36,132.78" fill="#a4a4a4" stroke="#000" stroke-width="1.1"/>
<circle cx="850" cy="135" r="2.2" fill="#fff" stroke="#000" stroke-width="1"/>
<text x="868" y="139" font-size="12.5" fill="#000" textLength="29.4" lengthAdjust="spacingAndGlyphs" font-family='"Liberation Sans", sans-serif'>syncd</text>
<text x="1043" y="139" font-size="12.5" fill="#000" text-anchor="end" font-family='"Liberation Sans", sans-serif'>0</text>
<text x="1053" y="139" font-size="12.5" fill="#000" textLength="28.8" lengthAdjust="spacingAndGlyphs" font-family='"Liberation Sans", sans-serif'>Sleep</text>
<circle cx="1145.5" cy="134.5" r="2.6" fill="#3a70c0"/>
<text x="1163" y="139" font-size="12.5" fill="#000" textLength="19.4" lengthAdjust="spacingAndGlyphs" font-family='"Liberation Sans", sans-serif'>root</text>
<text x="1248" y="139" font-size="12.5" fill="#000" text-anchor="end" font-family='"Liberation Sans", sans-serif'>2</text>
<rect x="839" y="143" width="418" height="16" fill="#d2d2d2"/>
<rect x="1013" y="143" width="35" height="16" fill="#b4b4b4"/>
<polygon points="857.36,149.54 857.5,151.0 855.69,152.13 855.36,153.22 856.24,155.17 855.3,156.3 853.22,155.82 852.22,156.36 851.46,158.36 850.0,158.5 848.87,156.69 847.78,156.36 845.83,157.24 844.7,156.3 845.18,154.22 844.64,153.22 842.64,152.46 842.5,151.0 844.31,149.87 844.64,148.78 843.76,146.83 844.7,145.7 846.78,146.18 847.78,145.64 848.54,143.64 850.0,143.5 851.13,145.31 852.22,145.64 854.17,144.76 855.3,145.7 854.82,147.78 855.36,148.78" fill="#a4a4a4" stroke="#000" stroke-width="1.1"/>
<circle cx="850" cy="151" r="2.2" fill="#fff" stroke="#000" stroke-width="1"/>
<text x="868" y="155" font-size="12.5" fill="#000" textLength="65.5" lengthAdjust="spacingAndGlyphs" font-family='"Liberation Sans", sans-serif'>VisualBuilder</text>
<text x="1043" y="155" font-size="12.5" fill="#000" text-anchor="end" font-family='"Liberation Sans", sans-serif'>0</text>
<text x="1053" y="155" font-size="12.5" fill="#000" textLength="31.3" lengthAdjust="spacingAndGlyphs" font-family='"Liberation Sans", sans-serif'>Select</text>
<circle cx="1145.5" cy="150.5" r="2.6" fill="#3a70c0"/>
<text x="1163" y="155" font-size="12.5" fill="#000" textLength="25.0" lengthAdjust="spacingAndGlyphs" font-family='"Liberation Sans", sans-serif'>anon</text>
<text x="1248" y="155" font-size="12.5" fill="#000" text-anchor="end" textLength="12.5" lengthAdjust="spacingAndGlyphs" font-family='"Liberation Sans", sans-serif'>21</text>
<rect x="839" y="159" width="418" height="16" fill="#ffffff"/>
<rect x="1013" y="159" width="35" height="16" fill="#d4d4d4"/>
<polygon points="857.36,165.54 857.5,167.0 855.69,168.13 855.36,169.22 856.24,171.17 855.3,172.3 853.22,171.82 852.22,172.36 851.46,174.36 850.0,174.5 848.87,172.69 847.78,172.36 845.83,173.24 844.7,172.3 845.18,170.22 844.64,169.22 842.64,168.46 842.5,167.0 844.31,165.87 844.64,164.78 843.76,162.83 844.7,161.7 846.78,162.18 847.78,161.64 848.54,159.64 850.0,159.5 851.13,161.31 852.22,161.64 854.17,160.76 855.3,161.7 854.82,163.78 855.36,164.78" fill="#a4a4a4" stroke="#000" stroke-width="1.1"/>
<circle cx="850" cy="167" r="2.2" fill="#fff" stroke="#000" stroke-width="1"/>
<text x="868" y="171" font-size="12.5" fill="#000" textLength="11.9" lengthAdjust="spacingAndGlyphs" font-family='"Liberation Sans", sans-serif'>sh</text>
<text x="1043" y="171" font-size="12.5" fill="#000" text-anchor="end" font-family='"Liberation Sans", sans-serif'>0</text>
<text x="1053" y="171" font-size="12.5" fill="#000" textLength="26.9" lengthAdjust="spacingAndGlyphs" font-family='"Liberation Sans", sans-serif'>Read</text>
<circle cx="1145.5" cy="166.5" r="2.6" fill="#3a70c0"/>
<text x="1163" y="171" font-size="12.5" fill="#000" textLength="25.0" lengthAdjust="spacingAndGlyphs" font-family='"Liberation Sans", sans-serif'>anon</text>
<text x="1248" y="171" font-size="12.5" fill="#000" text-anchor="end" textLength="12.5" lengthAdjust="spacingAndGlyphs" font-family='"Liberation Sans", sans-serif'>27</text>
<rect x="839" y="175" width="418" height="16" fill="#d2d2d2"/>
<rect x="1013" y="175" width="35" height="16" fill="#b4b4b4"/>
<polygon points="857.36,181.54 857.5,183.0 855.69,184.13 855.36,185.22 856.24,187.17 855.3,188.3 853.22,187.82 852.22,188.36 851.46,190.36 850.0,190.5 848.87,188.69 847.78,188.36 845.83,189.24 844.7,188.3 845.18,186.22 844.64,185.22 842.64,184.46 842.5,183.0 844.31,181.87 844.64,180.78 843.76,178.83 844.7,177.7 846.78,178.18 847.78,177.64 848.54,175.64 850.0,175.5 851.13,177.31 852.22,177.64 854.17,176.76 855.3,177.7 854.82,179.78 855.36,180.78" fill="#a4a4a4" stroke="#000" stroke-width="1.1"/>
<circle cx="850" cy="183" r="2.2" fill="#fff" stroke="#000" stroke-width="1"/>
<text x="868" y="187" font-size="12.5" fill="#000" textLength="42.5" lengthAdjust="spacingAndGlyphs" font-family='"Liberation Sans", sans-serif'>Terminal</text>
<text x="1043" y="187" font-size="12.5" fill="#000" text-anchor="end" font-family='"Liberation Sans", sans-serif'>0</text>
<text x="1053" y="187" font-size="12.5" fill="#000" textLength="31.3" lengthAdjust="spacingAndGlyphs" font-family='"Liberation Sans", sans-serif'>Select</text>
<circle cx="1145.5" cy="182.5" r="2.6" fill="#3a70c0"/>
<text x="1163" y="187" font-size="12.5" fill="#000" textLength="25.0" lengthAdjust="spacingAndGlyphs" font-family='"Liberation Sans", sans-serif'>anon</text>
<text x="1248" y="187" font-size="12.5" fill="#000" text-anchor="end" textLength="12.5" lengthAdjust="spacingAndGlyphs" font-family='"Liberation Sans", sans-serif'>26</text>
<rect x="839" y="191" width="418" height="16" fill="#ffffff"/>
<rect x="1013" y="191" width="35" height="16" fill="#d4d4d4"/>
<polygon points="857.36,197.54 857.5,199.0 855.69,200.13 855.36,201.22 856.24,203.17 855.3,204.3 853.22,203.82 852.22,204.36 851.46,206.36 850.0,206.5 848.87,204.69 847.78,204.36 845.83,205.24 844.7,204.3 845.18,202.22 844.64,201.22 842.64,200.46 842.5,199.0 844.31,197.87 844.64,196.78 843.76,194.83 844.7,193.7 846.78,194.18 847.78,193.64 848.54,191.64 850.0,191.5 851.13,193.31 852.22,193.64 854.17,192.76 855.3,193.7 854.82,195.78 855.36,196.78" fill="#a4a4a4" stroke="#000" stroke-width="1.1"/>
<circle cx="850" cy="199" r="2.2" fill="#fff" stroke="#000" stroke-width="1"/>
<text x="868" y="203" font-size="12.5" fill="#000" textLength="48.1" lengthAdjust="spacingAndGlyphs" font-family='"Liberation Sans", sans-serif'>IRCClient</text>
<text x="1043" y="203" font-size="12.5" fill="#000" text-anchor="end" font-family='"Liberation Sans", sans-serif'>0</text>
<text x="1053" y="203" font-size="12.5" fill="#000" textLength="31.3" lengthAdjust="spacingAndGlyphs" font-family='"Liberation Sans", sans-serif'>Select</text>
<circle cx="1145.5" cy="198.5" r="2.6" fill="#3a70c0"/>
<text x="1163" y="203" font-size="12.5" fill="#000" textLength="25.0" lengthAdjust="spacingAndGlyphs" font-family='"Liberation Sans", sans-serif'>anon</text>
<text x="1248" y="203" font-size="12.5" fill="#000" text-anchor="end" textLength="12.5" lengthAdjust="spacingAndGlyphs" font-family='"Liberation Sans", sans-serif'>25</text>
<rect x="839" y="207" width="418" height="16" fill="#d2d2d2"/>
<rect x="1013" y="207" width="35" height="16" fill="#b4b4b4"/>
<polygon points="857.36,213.54 857.5,215.0 855.69,216.13 855.36,217.22 856.24,219.17 855.3,220.3 853.22,219.82 852.22,220.36 851.46,222.36 850.0,222.5 848.87,220.69 847.78,220.36 845.83,221.24 844.7,220.3 845.18,218.22 844.64,217.22 842.64,216.46 842.5,215.0 844.31,213.87 844.64,212.78 843.76,210.83 844.7,209.7 846.78,210.18 847.78,209.64 848.54,207.64 850.0,207.5 851.13,209.31 852.22,209.64 854.17,208.76 855.3,209.7 854.82,211.78 855.36,212.78" fill="#a4a4a4" stroke="#000" stroke-width="1.1"/>
<circle cx="850" cy="215" r="2.2" fill="#fff" stroke="#000" stroke-width="1"/>
<text x="868" y="219" font-size="12.5" fill="#000" textLength="11.9" lengthAdjust="spacingAndGlyphs" font-family='"Liberation Sans", sans-serif'>sh</text>
<text x="1043" y="219" font-size="12.5" fill="#000" text-anchor="end" font-family='"Liberation Sans", sans-serif'>0</text>
<text x="1053" y="219" font-size="12.5" fill="#000" textLength="26.9" lengthAdjust="spacingAndGlyphs" font-family='"Liberation Sans", sans-serif'>Read</text>
<circle cx="1145.5" cy="214.5" r="2.6" fill="#3a70c0"/>
<text x="1163" y="219" font-size="12.5" fill="#000" textLength="25.0" lengthAdjust="spacingAndGlyphs" font-family='"Liberation Sans", sans-serif'>anon</text>
<text x="1248" y="219" font-size="12.5" fill="#000" text-anchor="end" textLength="12.5" lengthAdjust="spacingAndGlyphs" font-family='"Liberation Sans", sans-serif'>18</text>
<rect x="839" y="223" width="418" height="16" fill="#ffffff"/>
<rect x="1013" y="223" width="35" height="16" fill="#d4d4d4"/>
<polygon points="857.36,229.54 857.5,231.0 855.69,232.13 855.36,233.22 856.24,235.17 855.3,236.3 853.22,235.82 852.22,236.36 851.46,238.36 850.0,238.5 848.87,236.69 847.78,236.36 845.83,237.24 844.7,236.3 845.18,234.22 844.64,233.22 842.64,232.46 842.5,231.0 844.31,229.87 844.64,228.78 843.76,226.83 844.7,225.7 846.78,226.18 847.78,225.64 848.54,223.64 850.0,223.5 851.13,225.31 852.22,225.64 854.17,224.76 855.3,225.7 854.82,227.78 855.36,228.78" fill="#a4a4a4" stroke="#000" stroke-width="1.1"/>
<circle cx="850" cy="231" r="2.2" fill="#fff" stroke="#000" stroke-width="1"/>
<text x="868" y="235" font-size="12.5" fill="#000" textLength="64.4" lengthAdjust="spacingAndGlyphs" font-family='"Liberation Sans", sans-serif'>NetworkTask</text>
<text x="1043" y="235" font-size="12.5" fill="#000" text-anchor="end" font-family='"Liberation Sans", sans-serif'>0</text>
<text x="1053" y="235" font-size="12.5" fill="#000" textLength="46.9" lengthAdjust="spacingAndGlyphs" font-family='"Liberation Sans", sans-serif'>Snoozing</text>
<circle cx="1145.5" cy="230.5" r="2.6" fill="#3a70c0"/>
<text x="1163" y="235" font-size="12.5" fill="#000" textLength="19.4" lengthAdjust="spacingAndGlyphs" font-family='"Liberation Sans", sans-serif'>root</text>
<text x="1248" y="235" font-size="12.5" fill="#000" text-anchor="end" font-family='"Liberation Sans", sans-serif'>4</text>
<rect x="839" y="239" width="418" height="16" fill="#d2d2d2"/>
<rect x="1013" y="239" width="35" height="16" fill="#b4b4b4"/>
<polygon points="857.36,245.54 857.5,247.0 855.69,248.13 855.36,249.22 856.24,251.17 855.3,252.3 853.22,251.82 852.22,252.36 851.46,254.36 850.0,254.5 848.87,252.69 847.78,252.36 845.83,253.24 844.7,252.3 845.18,250.22 844.64,249.22 842.64,248.46 842.5,247.0 844.31,245.87 844.64,244.78 843.76,242.83 844.7,241.7 846.78,242.18 847.78,241.64 848.54,239.64 850.0,239.5 851.13,241.31 852.22,241.64 854.17,240.76 855.3,241.7 854.82,243.78 855.36,244.78" fill="#a4a4a4" stroke="#000" stroke-width="1.1"/>
<circle cx="850" cy="247" r="2.2" fill="#fff" stroke="#000" stroke-width="1"/>
<text x="868" y="251" font-size="12.5" fill="#000" textLength="62.5" lengthAdjust="spacingAndGlyphs" font-family='"Liberation Sans", sans-serif'>FileManager</text>
<text x="1043" y="251" font-size="12.5" fill="#000" text-anchor="end" font-family='"Liberation Sans", sans-serif'>0</text>
<text x="1053" y="251" font-size="12.5" fill="#000" textLength="31.3" lengthAdjust="spacingAndGlyphs" font-family='"Liberation Sans", sans-serif'>Select</text>
<circle cx="1145.5" cy="246.5" r="2.6" fill="#3a70c0"/>
<text x="1163" y="251" font-size="12.5" fill="#000" textLength="25.0" lengthAdjust="spacingAndGlyphs" font-family='"Liberation Sans", sans-serif'>anon</text>
<text x="1248" y="251" font-size="12.5" fill="#000" text-anchor="end" textLength="12.5" lengthAdjust="spacingAndGlyphs" font-family='"Liberation Sans", sans-serif'>20</text>
<rect x="839" y="255" width="418" height="16" fill="#ffffff"/>
<rect x="1013" y="255" width="35" height="16" fill="#d4d4d4"/>
<polygon points="857.36,261.54 857.5,263.0 855.69,264.13 855.36,265.22 856.24,267.17 855.3,268.3 853.22,267.82 852.22,268.36 851.46,270.36 850.0,270.5 848.87,268.69 847.78,268.36 845.83,269.24 844.7,268.3 845.18,266.22 844.64,265.22 842.64,264.46 842.5,263.0 844.31,261.87 844.64,260.78 843.76,258.83 844.7,257.7 846.78,258.18 847.78,257.64 848.54,255.64 850.0,255.5 851.13,257.31 852.22,257.64 854.17,256.76 855.3,257.7 854.82,259.78 855.36,260.78" fill="#a4a4a4" stroke="#000" stroke-width="1.1"/>
<circle cx="850" cy="263" r="2.2" fill="#fff" stroke="#000" stroke-width="1"/>
<text x="868" y="267" font-size="12.5" fill="#000" textLength="39.4" lengthAdjust="spacingAndGlyphs" font-family='"Liberation Sans", sans-serif'>Taskbar</text>
<text x="1043" y="267" font-size="12.5" fill="#000" text-anchor="end" font-family='"Liberation Sans", sans-serif'>0</text>
<text x="1053" y="267" font-size="12.5" fill="#000" textLength="31.3" lengthAdjust="spacingAndGlyphs" font-family='"Liberation Sans", sans-serif'>Select</text>
<circle cx="1145.5" cy="262.5" r="2.6" fill="#3a70c0"/>
<text x="1163" y="267" font-size="12.5" fill="#000" textLength="25.0" lengthAdjust="spacingAndGlyphs" font-family='"Liberation Sans", sans-serif'>anon</text>
<text x="1248" y="267" font-size="12.5" fill="#000" text-anchor="end" font-family='"Liberation Sans", sans-serif'>7</text>
<rect x="839" y="271" width="418" height="16" fill="#d2d2d2"/>
<rect x="1013" y="271" width="35" height="16" fill="#b4b4b4"/>
<polygon points="857.36,277.54 857.5,279.0 855.69,280.13 855.36,281.22 856.24,283.17 855.3,284.3 853.22,283.82 852.22,284.36 851.46,286.36 850.0,286.5 848.87,284.69 847.78,284.36 845.83,285.24 844.7,284.3 845.18,282.22 844.64,281.22 842.64,280.46 842.5,279.0 844.31,277.87 844.64,276.78 843.76,274.83 844.7,273.7 846.78,274.18 847.78,273.64 848.54,271.64 850.0,271.5 851.13,273.31 852.22,273.64 854.17,272.76 855.3,273.7 854.82,275.78 855.36,276.78" fill="#a4a4a4" stroke="#000" stroke-width="1.1"/>
<circle cx="850" cy="279" r="2.2" fill="#fff" stroke="#000" stroke-width="1"/>
<text x="868" y="283" font-size="12.5" fill="#000" textLength="42.5" lengthAdjust="spacingAndGlyphs" font-family='"Liberation Sans", sans-serif'>Finalizer</text>
<text x="1043" y="283" font-size="12.5" fill="#000" text-anchor="end" font-family='"Liberation Sans", sans-serif'>0</text>
<text x="1053" y="283" font-size="12.5" fill="#000" textLength="36.9" lengthAdjust="spacingAndGlyphs" font-family='"Liberation Sans", sans-serif'>Lurking</text>
<polygon points="1145.5,283 1150,278 1147,278 1147,274 1144,274 1144,278 1141,278" fill="#901010"/>
<text x="1163" y="283" font-size="12.5" fill="#000" textLength="19.4" lengthAdjust="spacingAndGlyphs" font-family='"Liberation Sans", sans-serif'>root</text>
<text x="1248" y="283" font-size="12.5" fill="#000" text-anchor="end" font-family='"Liberation Sans", sans-serif'>3</text>
<rect x="839" y="287" width="418" height="16" fill="#ffffff"/>
<rect x="1013" y="287" width="35" height="16" fill="#d4d4d4"/>
<polygon points="857.36,293.54 857.5,295.0 855.69,296.13 855.36,297.22 856.24,299.17 855.3,300.3 853.22,299.82 852.22,300.36 851.46,302.36 850.0,302.5 848.87,300.69 847.78,300.36 845.83,301.24 844.7,300.3 845.18,298.22 844.64,297.22 842.64,296.46 842.5,295.0 844.31,293.87 844.64,292.78 843.76,290.83 844.7,289.7 846.78,290.18 847.78,289.64 848.54,287.64 850.0,287.5 851.13,289.31 852.22,289.64 854.17,288.76 855.3,289.7 854.82,291.78 855.36,292.78" fill="#a4a4a4" stroke="#000" stroke-width="1.1"/>
<circle cx="850" cy="295" r="2.2" fill="#fff" stroke="#000" stroke-width="1"/>
<text x="868" y="299" font-size="12.5" fill="#000" textLength="70.0" lengthAdjust="spacingAndGlyphs" font-family='"Liberation Sans", sans-serif'>LookupServer</text>
<text x="1043" y="299" font-size="12.5" fill="#000" text-anchor="end" font-family='"Liberation Sans", sans-serif'>0</text>
<text x="1053" y="299" font-size="12.5" fill="#000" textLength="31.3" lengthAdjust="spacingAndGlyphs" font-family='"Liberation Sans", sans-serif'>Select</text>
<circle cx="1145.5" cy="294.5" r="2.6" fill="#3a70c0"/>
<text x="1163" y="299" font-size="12.5" fill="#000" textLength="25.0" lengthAdjust="spacingAndGlyphs" font-family='"Liberation Sans", sans-serif'>anon</text>
<text x="1248" y="299" font-size="12.5" fill="#000" text-anchor="end" font-family='"Liberation Sans", sans-serif'>5</text>
<rect x="839" y="303" width="418" height="16" fill="#d2d2d2"/>
<rect x="1013" y="303" width="35" height="16" fill="#b4b4b4"/>
<polygon points="857.36,309.54 857.5,311.0 855.69,312.13 855.36,313.22 856.24,315.17 855.3,316.3 853.22,315.82 852.22,316.36 851.46,318.36 850.0,318.5 848.87,316.69 847.78,316.36 845.83,317.24 844.7,316.3 845.18,314.22 844.64,313.22 842.64,312.46 842.5,311.0 844.31,309.87 844.64,308.78 843.76,306.83 844.7,305.7 846.78,306.18 847.78,305.64 848.54,303.64 850.0,303.5 851.13,305.31 852.22,305.64 854.17,304.76 855.3,305.7 854.82,307.78 855.36,308.78" fill="#a4a4a4" stroke="#000" stroke-width="1.1"/>
<circle cx="850" cy="311" r="2.2" fill="#fff" stroke="#000" stroke-width="1"/>
<text x="868" y="315" font-size="12.5" fill="#000" textLength="42.5" lengthAdjust="spacingAndGlyphs" font-family='"Liberation Sans", sans-serif'>Terminal</text>
<text x="1043" y="315" font-size="12.5" fill="#000" text-anchor="end" font-family='"Liberation Sans", sans-serif'>0</text>
<text x="1053" y="315" font-size="12.5" fill="#000" textLength="31.3" lengthAdjust="spacingAndGlyphs" font-family='"Liberation Sans", sans-serif'>Select</text>
<circle cx="1145.5" cy="310.5" r="2.6" fill="#3a70c0"/>
<text x="1163" y="315" font-size="12.5" fill="#000" textLength="25.0" lengthAdjust="spacingAndGlyphs" font-family='"Liberation Sans", sans-serif'>anon</text>
<text x="1248" y="315" font-size="12.5" fill="#000" text-anchor="end" textLength="12.5" lengthAdjust="spacingAndGlyphs" font-family='"Liberation Sans", sans-serif'>17</text>
<rect x="839" y="319" width="418" height="18" fill="#ffffff"/>
<rect x="1257" y="81" width="15" height="256" fill="#d4d0c8"/>
<rect x="1257" y="81" width="15" height="16" fill="#c0c0c0"/>
<rect x="1257" y="81" width="14" height="1" fill="#ffffff"/>
<rect x="1257" y="81" width="1" height="15" fill="#ffffff"/>
<rect x="1257" y="96" width="15" height="1" fill="#404040"/>
<rect x="1271" y="81" width="1" height="16" fill="#404040"/>
<rect x="1258" y="82" width="12" height="1" fill="#dfdfdf"/>
<rect x="1258" y="82" width="1" height="13" fill="#dfdfdf"/>
<rect x="1258" y="95" width="13" height="1" fill="#808080"/>
<rect x="1270" y="82" width="1" height="14" fill="#808080"/>
<polygon points="1264.5,85 1268,88.5 1266,88.5 1266,92 1263,92 1263,88.5 1261,88.5" fill="#808080"/>
<rect x="1257" y="321" width="15" height="16" fill="#c0c0c0"/>
<rect x="1257" y="321" width="14" height="1" fill="#ffffff"/>
<rect x="1257" y="321" width="1" height="15" fill="#ffffff"/>
<rect x="1257" y="336" width="15" height="1" fill="#404040"/>
<rect x="1271" y="321" width="1" height="16" fill="#404040"/>
<rect x="1258" y="322" width="12" height="1" fill="#dfdfdf"/>
<rect x="1258" y="322" width="1" height="13" fill="#dfdfdf"/>
<rect x="1258" y="335" width="13" height="1" fill="#808080"/>
<rect x="1270" y="322" width="1" height="14" fill="#808080"/>
<polygon points="1264.5,332 1268,328.5 1266,328.5 1266,325 1263,325 1263,328.5 1261,328.5" fill="#808080"/>
<rect x="839" y="337" width="418" height="15" fill="#d4d0c8"/>
<rect x="839" y="337" width="16" height="15" fill="#c0c0c0"/>
<rect x="839" y="337" width="15" height="1" fill="#ffffff"/>
<rect x="839" y="337" width="1" height="14" fill="#ffffff"/>
<rect x="839" y="351" width="16" height="1" fill="#404040"/>
<rect x="854" y="337" width="1" height="15" fill="#404040"/>
<rect x="840" y="338" width="13" height="1" fill="#dfdfdf"/>
<rect x="840" y="338" width="1" height="12" fill="#dfdfdf"/>
<rect x="840" y="350" width="14" height="1" fill="#808080"/>
<rect x="853" y="338" width="1" height="13" fill="#808080"/>
<polygon points="843,344.5 846.5,341 846.5,343 850,343 850,346 846.5,346 846.5,348" fill="#000000"/>
<rect x="1241" y="337" width="16" height="15" fill="#c0c0c0"/>
<rect x="1241" y="337" width="15" height="1" fill="#ffffff"/>
<rect x="1241" y="337" width="1" height="14" fill="#ffffff"/>
<rect x="1241" y="351" width="16" height="1" fill="#404040"/>
<rect x="1256" y="337" width="1" height="15" fill="#404040"/>
<rect x="1242" y="338" width="13" height="1" fill="#dfdfdf"/>
<rect x="1242" y="338" width="1" height="12" fill="#dfdfdf"/>
<rect x="1242" y="350" width="14" height="1" fill="#808080"/>
<rect x="1255" y="338" width="1" height="13" fill="#808080"/>
<polygon points="1252,344.5 1248.5,341 1248.5,343 1245,343 1245,346 1248.5,346 1248.5,348" fill="#000000"/>
<rect x="855" y="337" width="167" height="15" fill="#c0c0c0"/>
<rect x="855" y="337" width="166" height="1" fill="#ffffff"/>
<rect x="855" y="337" width="1" height="14" fill="#ffffff"/>
<rect x="855" y="351" width="167" height="1" fill="#404040"/>
<rect x="1021" y="337" width="1" height="15" fill="#404040"/>
<rect x="856" y="338" width="164" height="1" fill="#dfdfdf"/>
<rect x="856" y="338" width="1" height="12" fill="#dfdfdf"/>
<rect x="856" y="350" width="165" height="1" fill="#808080"/>
<rect x="1020" y="338" width="1" height="13" fill="#808080"/>
<rect x="1257" y="337" width="15" height="15" fill="#c0c0c0"/>
<rect x="837" y="354" width="437" height="72" fill="#c0c0c0"/>
<rect x="837" y="354" width="437" height="1" fill="#ffffff"/>
<rect x="837" y="354" width="1" height="72" fill="#ffffff"/>
<text x="927.5" y="372" font-size="12" fill="#000" font-weight="bold" textLength="121" lengthAdjust="spacingAndGlyphs" font-family='"Liberation Sans", sans-serif'>Userspace physical:</text>
<text x="1181" y="372" font-size="12.5" fill="#000" text-anchor="end" textLength="77" lengthAdjust="spacingAndGlyphs" font-family='"Liberation Sans", sans-serif'>31608K/78536K</text>
<text x="927.5" y="387" font-size="12" fill="#000" font-weight="bold" textLength="124" lengthAdjust="spacingAndGlyphs" font-family='"Liberation Sans", sans-serif'>Supervisor physical:</text>
<text x="1181" y="387" font-size="12.5" fill="#000" text-anchor="end" textLength="60" lengthAdjust="spacingAndGlyphs" font-family='"Liberation Sans", sans-serif'>928K/2052K</text>
<text x="927.5" y="402" font-size="12" fill="#000" font-weight="bold" textLength="75" lengthAdjust="spacingAndGlyphs" font-family='"Liberation Sans", sans-serif'>Kernel heap:</text>
<text x="1181" y="402" font-size="12.5" fill="#000" text-anchor="end" textLength="60" lengthAdjust="spacingAndGlyphs" font-family='"Liberation Sans", sans-serif'>859K/1024K</text>
<text x="927.5" y="417" font-size="12" fill="#000" font-weight="bold" textLength="123" lengthAdjust="spacingAndGlyphs" font-family='"Liberation Sans", sans-serif'>Calls kmalloc/kfree:</text>
<text x="1181" y="417" font-size="12.5" fill="#000" text-anchor="end" textLength="116" lengthAdjust="spacingAndGlyphs" font-family='"Liberation Sans", sans-serif'>164203/157362 (+6841)</text>
<rect x="24" y="427" width="3" height="232" fill="#888888"/>
<rect x="598" y="427" width="3" height="232" fill="#888888"/>
<rect x="24" y="656" width="577" height="3" fill="#888888"/>
<rect x="24" y="406" width="577" height="22" fill="url(#gi)"/>
<rect x="24" y="406" width="577" height="1" fill="#a0a0a0"/>
<rect x="24" y="406" width="1" height="253" fill="#a0a0a0"/>
<rect x="27" y="427" width="571" height="1" fill="#808080"/>
<text x="45" y="422" font-size="13" fill="#d5d0c7" font-weight="bold" textLength="113.5" lengthAdjust="spacingAndGlyphs" font-family='"Liberation Sans", sans-serif'>anon@courage:/dev</text>
<rect x="162" y="410" width="403" height="1" fill="#808080"/>
<rect x="162" y="412" width="403" height="1" fill="#808080"/>
<rect x="162" y="414" width="403" height="1" fill="#808080"/>
<rect x="162" y="416" width="403" height="1" fill="#808080"/>
<rect x="162" y="418" width="403" height="1" fill="#808080"/>
<rect x="162" y="420" width="403" height="1" fill="#808080"/>
<rect x="162" y="422" width="403" height="1" fill="#808080"/>
<rect x="162" y="424" width="403" height="1" fill="#808080"/>
<rect x="582" y="410" width="15" height="15" fill="#c0c0c0"/>
<rect x="582" y="410" width="14" height="1" fill="#ffffff"/>
<rect x="582" y="410" width="1" height="14" fill="#ffffff"/>
<rect x="582" y="424" width="15" height="1" fill="#404040"/>
<rect x="596" y="410" width="1" height="15" fill="#404040"/>
<rect x="583" y="411" width="12" height="1" fill="#dfdfdf"/>
<rect x="583" y="411" width="1" height="12" fill="#dfdfdf"/>
<rect x="583" y="423" width="13" height="1" fill="#808080"/>
<rect x="595" y="411" width="1" height="13" fill="#808080"/>
<rect x="567" y="410" width="15" height="15" fill="#c0c0c0"/>
<rect x="567" y="410" width="14" height="1" fill="#ffffff"/>
<rect x="567" y="410" width="1" height="14" fill="#ffffff"/>
<rect x="567" y="424" width="15" height="1" fill="#404040"/>
<rect x="581" y="410" width="1" height="15" fill="#404040"/>
<rect x="568" y="411" width="12" height="1" fill="#dfdfdf"/>
<rect x="568" y="411" width="1" height="12" fill="#dfdfdf"/>
<rect x="568" y="423" width="13" height="1" fill="#808080"/>
<rect x="580" y="411" width="1" height="13" fill="#808080"/>
<path d="M585.5,413.5 L592.5,420.5 M592.5,413.5 L585.5,420.5" stroke="#000" stroke-width="2"/>
<polygon points="570.5,416 577.5,416 574,419.5" fill="#000"/>
<rect x="28" y="411" width="14" height="14" fill="#000000" rx="2"/>
<polyline points="30.5,413.5 33,415.5 30.5,417.5" fill="none" stroke="#e8e8e8" stroke-width="1"/>
<rect x="27" y="428" width="571" height="228" fill="#000" fill-opacity="0.84"/>
<text x="29" y="439" font-size="12.5" fill="#e8e8e8" letter-spacing="-0.500" font-family='"Liberation Mono", monospace'>crw-r--r--</text>
<text x="127" y="439" font-size="12.5" fill="#e8e8e8" letter-spacing="-0.500" font-family='"Liberation Mono", monospace'>0</text>
<text x="162" y="439" font-size="12.5" fill="#e8e8e8" letter-spacing="-0.500" font-family='"Liberation Mono", monospace'>0</text>
<text x="204" y="439" font-size="12.5" fill="#e8e8e8" letter-spacing="-0.500" font-family='"Liberation Mono", monospace'>1,</text>
<text x="239" y="439" font-size="12.5" fill="#e8e8e8" letter-spacing="-0.500" font-family='"Liberation Mono", monospace'>8</text>
<text x="267" y="439" font-size="12.5" fill="#e8e8e8" letter-spacing="-0.500" font-family='"Liberation Mono", monospace'>2019-04-30 13:08:41</text>
<text x="414" y="439" font-size="12.5" fill="#c8a000" letter-spacing="-0.500" font-family='"Liberation Mono", monospace'>random</text>
<text x="29" y="453" font-size="12.5" fill="#e8e8e8" letter-spacing="-0.500" font-family='"Liberation Mono", monospace'>crw-r--r--</text>
<text x="127" y="453" font-size="12.5" fill="#e8e8e8" letter-spacing="-0.500" font-family='"Liberation Mono", monospace'>0</text>
<text x="162" y="453" font-size="12.5" fill="#e8e8e8" letter-spacing="-0.500" font-family='"Liberation Mono", monospace'>0</text>
<text x="204" y="453" font-size="12.5" fill="#e8e8e8" letter-spacing="-0.500" font-family='"Liberation Mono", monospace'>1,</text>
<text x="239" y="453" font-size="12.5" fill="#e8e8e8" letter-spacing="-0.500" font-family='"Liberation Mono", monospace'>3</text>
<text x="267" y="453" font-size="12.5" fill="#e8e8e8" letter-spacing="-0.500" font-family='"Liberation Mono", monospace'>2019-04-30 13:08:41</text>
<text x="414" y="453" font-size="12.5" fill="#c8a000" letter-spacing="-0.500" font-family='"Liberation Mono", monospace'>null</text>
<text x="29" y="467" font-size="12.5" fill="#e8e8e8" letter-spacing="-0.500" font-family='"Liberation Mono", monospace'>crw-r--r--</text>
<text x="127" y="467" font-size="12.5" fill="#e8e8e8" letter-spacing="-0.500" font-family='"Liberation Mono", monospace'>0</text>
<text x="162" y="467" font-size="12.5" fill="#e8e8e8" letter-spacing="-0.500" font-family='"Liberation Mono", monospace'>0</text>
<text x="204" y="467" font-size="12.5" fill="#e8e8e8" letter-spacing="-0.500" font-family='"Liberation Mono", monospace'>1,</text>
<text x="239" y="467" font-size="12.5" fill="#e8e8e8" letter-spacing="-0.500" font-family='"Liberation Mono", monospace'>5</text>
<text x="267" y="467" font-size="12.5" fill="#e8e8e8" letter-spacing="-0.500" font-family='"Liberation Mono", monospace'>2019-04-30 13:08:41</text>
<text x="414" y="467" font-size="12.5" fill="#c8a000" letter-spacing="-0.500" font-family='"Liberation Mono", monospace'>zero</text>
<text x="29" y="481" font-size="12.5" fill="#e8e8e8" letter-spacing="-0.500" font-family='"Liberation Mono", monospace'>crw-r--r--</text>
<text x="127" y="481" font-size="12.5" fill="#e8e8e8" letter-spacing="-0.500" font-family='"Liberation Mono", monospace'>0</text>
<text x="162" y="481" font-size="12.5" fill="#e8e8e8" letter-spacing="-0.500" font-family='"Liberation Mono", monospace'>0</text>
<text x="204" y="481" font-size="12.5" fill="#e8e8e8" letter-spacing="-0.500" font-family='"Liberation Mono", monospace'>1,</text>
<text x="239" y="481" font-size="12.5" fill="#e8e8e8" letter-spacing="-0.500" font-family='"Liberation Mono", monospace'>7</text>
<text x="267" y="481" font-size="12.5" fill="#e8e8e8" letter-spacing="-0.500" font-family='"Liberation Mono", monospace'>2019-04-30 13:08:41</text>
<text x="414" y="481" font-size="12.5" fill="#c8a000" letter-spacing="-0.500" font-family='"Liberation Mono", monospace'>full</text>
<text x="29" y="495" font-size="12.5" fill="#e8e8e8" letter-spacing="-0.500" font-family='"Liberation Mono", monospace'>crw-rw-rw-</text>
<text x="127" y="495" font-size="12.5" fill="#e8e8e8" letter-spacing="-0.500" font-family='"Liberation Mono", monospace'>0</text>
<text x="162" y="495" font-size="12.5" fill="#e8e8e8" letter-spacing="-0.500" font-family='"Liberation Mono", monospace'>0</text>
<text x="204" y="495" font-size="12.5" fill="#e8e8e8" letter-spacing="-0.500" font-family='"Liberation Mono", monospace'>1,</text>
<text x="232" y="495" font-size="12.5" fill="#e8e8e8" letter-spacing="-0.500" font-family='"Liberation Mono", monospace'>18</text>
<text x="267" y="495" font-size="12.5" fill="#e8e8e8" letter-spacing="-0.500" font-family='"Liberation Mono", monospace'>2019-04-30 13:08:41</text>
<text x="414" y="495" font-size="12.5" fill="#c8a000" letter-spacing="-0.500" font-family='"Liberation Mono", monospace'>debuglog</text>
<text x="29" y="509" font-size="12.5" fill="#e8e8e8" letter-spacing="-0.500" font-family='"Liberation Mono", monospace'>crw-r--r--</text>
<text x="127" y="509" font-size="12.5" fill="#e8e8e8" letter-spacing="-0.500" font-family='"Liberation Mono", monospace'>0</text>
<text x="162" y="509" font-size="12.5" fill="#e8e8e8" letter-spacing="-0.500" font-family='"Liberation Mono", monospace'>0</text>
<text x="197" y="509" font-size="12.5" fill="#e8e8e8" letter-spacing="-0.500" font-family='"Liberation Mono", monospace'>85,</text>
<text x="239" y="509" font-size="12.5" fill="#e8e8e8" letter-spacing="-0.500" font-family='"Liberation Mono", monospace'>1</text>
<text x="267" y="509" font-size="12.5" fill="#e8e8e8" letter-spacing="-0.500" font-family='"Liberation Mono", monospace'>2019-04-30 13:08:41</text>
<text x="414" y="509" font-size="12.5" fill="#c8a000" letter-spacing="-0.500" font-family='"Liberation Mono", monospace'>keyboard</text>
<text x="29" y="523" font-size="12.5" fill="#e8e8e8" letter-spacing="-0.500" font-family='"Liberation Mono", monospace'>crw-r--r--</text>
<text x="127" y="523" font-size="12.5" fill="#e8e8e8" letter-spacing="-0.500" font-family='"Liberation Mono", monospace'>0</text>
<text x="162" y="523" font-size="12.5" fill="#e8e8e8" letter-spacing="-0.500" font-family='"Liberation Mono", monospace'>0</text>
<text x="197" y="523" font-size="12.5" fill="#e8e8e8" letter-spacing="-0.500" font-family='"Liberation Mono", monospace'>10,</text>
<text x="239" y="523" font-size="12.5" fill="#e8e8e8" letter-spacing="-0.500" font-family='"Liberation Mono", monospace'>1</text>
<text x="267" y="523" font-size="12.5" fill="#e8e8e8" letter-spacing="-0.500" font-family='"Liberation Mono", monospace'>2019-04-30 13:08:41</text>
<text x="414" y="523" font-size="12.5" fill="#c8a000" letter-spacing="-0.500" font-family='"Liberation Mono", monospace'>psaux</text>
<text x="29" y="537" font-size="12.5" fill="#e8e8e8" letter-spacing="-0.500" font-family='"Liberation Mono", monospace'>crw-rw-rw-</text>
<text x="127" y="537" font-size="12.5" fill="#e8e8e8" letter-spacing="-0.500" font-family='"Liberation Mono", monospace'>0</text>
<text x="162" y="537" font-size="12.5" fill="#e8e8e8" letter-spacing="-0.500" font-family='"Liberation Mono", monospace'>0</text>
<text x="204" y="537" font-size="12.5" fill="#e8e8e8" letter-spacing="-0.500" font-family='"Liberation Mono", monospace'>5,</text>
<text x="239" y="537" font-size="12.5" fill="#e8e8e8" letter-spacing="-0.500" font-family='"Liberation Mono", monospace'>2</text>
<text x="267" y="537" font-size="12.5" fill="#e8e8e8" letter-spacing="-0.500" font-family='"Liberation Mono", monospace'>2019-04-30 13:08:41</text>
<text x="414" y="537" font-size="12.5" fill="#c8a000" letter-spacing="-0.500" font-family='"Liberation Mono", monospace'>ptmx</text>
<text x="29" y="551" font-size="12.5" fill="#e8e8e8" letter-spacing="-0.500" font-family='"Liberation Mono", monospace'>lrwxrwxrwx</text>
<text x="127" y="551" font-size="12.5" fill="#e8e8e8" letter-spacing="-0.500" font-family='"Liberation Mono", monospace'>0</text>
<text x="162" y="551" font-size="12.5" fill="#e8e8e8" letter-spacing="-0.500" font-family='"Liberation Mono", monospace'>0</text>
<text x="232" y="551" font-size="12.5" fill="#e8e8e8" letter-spacing="-0.500" font-family='"Liberation Mono", monospace'>15</text>
<text x="267" y="551" font-size="12.5" fill="#e8e8e8" letter-spacing="-0.500" font-family='"Liberation Mono", monospace'>2019-04-30 13:08:41</text>
<text x="414" y="551" font-size="12.5" fill="#10a8a8" letter-spacing="-0.500" font-family='"Liberation Mono", monospace'>stdin</text>
<text x="449" y="551" font-size="12.5" fill="#e8e8e8" letter-spacing="-0.500" font-family='"Liberation Mono", monospace'> -&gt; /proc/self/fd/0</text>
<text x="29" y="565" font-size="12.5" fill="#e8e8e8" letter-spacing="-0.500" font-family='"Liberation Mono", monospace'>lrwxrwxrwx</text>
<text x="127" y="565" font-size="12.5" fill="#e8e8e8" letter-spacing="-0.500" font-family='"Liberation Mono", monospace'>0</text>
<text x="162" y="565" font-size="12.5" fill="#e8e8e8" letter-spacing="-0.500" font-family='"Liberation Mono", monospace'>0</text>
<text x="232" y="565" font-size="12.5" fill="#e8e8e8" letter-spacing="-0.500" font-family='"Liberation Mono", monospace'>15</text>
<text x="267" y="565" font-size="12.5" fill="#e8e8e8" letter-spacing="-0.500" font-family='"Liberation Mono", monospace'>2019-04-30 13:08:41</text>
<text x="414" y="565" font-size="12.5" fill="#10a8a8" letter-spacing="-0.500" font-family='"Liberation Mono", monospace'>stdout</text>
<text x="456" y="565" font-size="12.5" fill="#e8e8e8" letter-spacing="-0.500" font-family='"Liberation Mono", monospace'> -&gt; /proc/self/fd/1</text>
<text x="29" y="579" font-size="12.5" fill="#e8e8e8" letter-spacing="-0.500" font-family='"Liberation Mono", monospace'>lrwxrwxrwx</text>
<text x="127" y="579" font-size="12.5" fill="#e8e8e8" letter-spacing="-0.500" font-family='"Liberation Mono", monospace'>0</text>
<text x="162" y="579" font-size="12.5" fill="#e8e8e8" letter-spacing="-0.500" font-family='"Liberation Mono", monospace'>0</text>
<text x="232" y="579" font-size="12.5" fill="#e8e8e8" letter-spacing="-0.500" font-family='"Liberation Mono", monospace'>15</text>
<text x="267" y="579" font-size="12.5" fill="#e8e8e8" letter-spacing="-0.500" font-family='"Liberation Mono", monospace'>2019-04-30 13:08:41</text>
<text x="414" y="579" font-size="12.5" fill="#10a8a8" letter-spacing="-0.500" font-family='"Liberation Mono", monospace'>stderr</text>
<text x="456" y="579" font-size="12.5" fill="#e8e8e8" letter-spacing="-0.500" font-family='"Liberation Mono", monospace'> -&gt; /proc/self/fd/2</text>
<text x="29" y="593" font-size="12.5" fill="#e00000" letter-spacing="-0.500" font-family='"Liberation Mono", monospace'>anon</text>
<text x="57" y="593" font-size="12.5" fill="#e8e8e8" letter-spacing="-0.500" font-family='"Liberation Mono", monospace'>@courage:</text>
<text x="120" y="593" font-size="12.5" fill="#20a020" letter-spacing="-0.500" font-family='"Liberation Mono", monospace'>/dev</text>
<text x="148" y="593" font-size="12.5" fill="#e8e8e8" letter-spacing="-0.500" font-family='"Liberation Mono", monospace'>$&gt; id</text>
<text x="29" y="607" font-size="12.5" fill="#e8e8e8" letter-spacing="-0.500" font-family='"Liberation Mono", monospace'>uid=100(anon), gid=100(users), groups=100(users)</text>
<text x="29" y="621" font-size="12.5" fill="#e00000" letter-spacing="-0.500" font-family='"Liberation Mono", monospace'>anon</text>
<text x="57" y="621" font-size="12.5" fill="#e8e8e8" letter-spacing="-0.500" font-family='"Liberation Mono", monospace'>@courage:</text>
<text x="120" y="621" font-size="12.5" fill="#20a020" letter-spacing="-0.500" font-family='"Liberation Mono", monospace'>/dev</text>
<text x="148" y="621" font-size="12.5" fill="#e8e8e8" letter-spacing="-0.500" font-family='"Liberation Mono", monospace'>$&gt; uname -a</text>
<text x="29" y="635" font-size="12.5" fill="#e8e8e8" letter-spacing="-0.500" font-family='"Liberation Mono", monospace'>Serenity courage 1.0-dev i386</text>
<text x="29" y="649" font-size="12.5" fill="#e00000" letter-spacing="-0.500" font-family='"Liberation Mono", monospace'>anon</text>
<text x="57" y="649" font-size="12.5" fill="#e8e8e8" letter-spacing="-0.500" font-family='"Liberation Mono", monospace'>@courage:</text>
<text x="120" y="649" font-size="12.5" fill="#20a020" letter-spacing="-0.500" font-family='"Liberation Mono", monospace'>/dev</text>
<text x="148" y="649" font-size="12.5" fill="#e8e8e8" letter-spacing="-0.500" font-family='"Liberation Mono", monospace'>$&gt; </text>
<rect x="169.5" y="640.5" width="6" height="11" fill="none" stroke="#e8e8e8" stroke-width="1"/>
<rect x="604" y="474" width="3" height="200" fill="#888888"/>
<rect x="1259" y="474" width="3" height="200" fill="#888888"/>
<rect x="604" y="671" width="658" height="3" fill="#888888"/>
<rect x="604" y="453" width="658" height="22" fill="url(#gi)"/>
<rect x="604" y="453" width="658" height="1" fill="#a0a0a0"/>
<rect x="604" y="453" width="1" height="221" fill="#a0a0a0"/>
<rect x="607" y="474" width="652" height="1" fill="#808080"/>
<text x="625" y="469" font-size="13" fill="#d5d0c7" font-weight="bold" textLength="225" lengthAdjust="spacingAndGlyphs" font-family='"Liberation Sans", sans-serif'>IRC Client: seren1ty@irc.dal.net:6667</text>
<rect x="854" y="457" width="372" height="1" fill="#808080"/>
<rect x="854" y="459" width="372" height="1" fill="#808080"/>
<rect x="854" y="461" width="372" height="1" fill="#808080"/>
<rect x="854" y="463" width="372" height="1" fill="#808080"/>
<rect x="854" y="465" width="372" height="1" fill="#808080"/>
<rect x="854" y="467" width="372" height="1" fill="#808080"/>
<rect x="854" y="469" width="372" height="1" fill="#808080"/>
<rect x="854" y="471" width="372" height="1" fill="#808080"/>
<rect x="1243" y="457" width="15" height="15" fill="#c0c0c0"/>
<rect x="1243" y="457" width="14" height="1" fill="#ffffff"/>
<rect x="1243" y="457" width="1" height="14" fill="#ffffff"/>
<rect x="1243" y="471" width="15" height="1" fill="#404040"/>
<rect x="1257" y="457" width="1" height="15" fill="#404040"/>
<rect x="1244" y="458" width="12" height="1" fill="#dfdfdf"/>
<rect x="1244" y="458" width="1" height="12" fill="#dfdfdf"/>
<rect x="1244" y="470" width="13" height="1" fill="#808080"/>
<rect x="1256" y="458" width="1" height="13" fill="#808080"/>
<rect x="1228" y="457" width="15" height="15" fill="#c0c0c0"/>
<rect x="1228" y="457" width="14" height="1" fill="#ffffff"/>
<rect x="1228" y="457" width="1" height="14" fill="#ffffff"/>
<rect x="1228" y="471" width="15" height="1" fill="#404040"/>
<rect x="1242" y="457" width="1" height="15" fill="#404040"/>
<rect x="1229" y="458" width="12" height="1" fill="#dfdfdf"/>
<rect x="1229" y="458" width="1" height="12" fill="#dfdfdf"/>
<rect x="1229" y="470" width="13" height="1" fill="#808080"/>
<rect x="1241" y="458" width="1" height="13" fill="#808080"/>
<path d="M1246.5,460.5 L1253.5,467.5 M1253.5,460.5 L1246.5,467.5" stroke="#000" stroke-width="2"/>
<polygon points="1231.5,463 1238.5,463 1235,466.5" fill="#000"/>
<rect x="609" y="459" width="12" height="12" fill="#000000" rx="1"/>
<rect x="610" y="460" width="10" height="1" fill="#d88850"/>
<rect x="610" y="462" width="10" height="8" fill="#ffffff"/>
<rect x="607" y="475" width="652" height="196" fill="#c0c0c0"/>
<rect x="607" y="475" width="652" height="1" fill="#ffffff"/>
<rect x="607" y="501" width="652" height="1" fill="#808080"/>
<rect x="637" y="480" width="1" height="18" fill="#808080"/>
<rect x="638" y="480" width="1" height="18" fill="#ffffff"/>
<rect x="692" y="480" width="1" height="18" fill="#808080"/>
<rect x="693" y="480" width="1" height="18" fill="#ffffff"/>
<ellipse cx="620.5" cy="486" rx="4.6" ry="4.8" fill="#2a2a2a"/>
<path d="M614,497 L614,494.5 Q614.5,490.5 618,490.5 L623,490.5 Q626.5,490.5 627,494.5 L627,497 Z" fill="#2a2a2a"/>
<path d="M617,484 Q620,480 623,483 L622,489 Q619,491 617,488 Z" fill="#fff"/>
<circle cx="619.5" cy="485" r="1.3" fill="#000"/>
<path d="M615.5,495.5 h3 M617,494 v3" stroke="#2a7ae0" stroke-width="1"/>
<path d="M619.5,495.5 h3 M621,494 v3" stroke="#2a7ae0" stroke-width="1"/>
<path d="M623.5,495.5 h3 M625,494 v3" stroke="#2a7ae0" stroke-width="1"/>
<path d="M649.5,483 L649.5,495 M654.5,483 L654.5,495 M646,486.5 L658,486.5 M646,491.5 L658,491.5" stroke="#1c4a80" stroke-width="3.4"/>
<path d="M649.5,483 L649.5,495 M654.5,483 L654.5,495 M646,486.5 L658,486.5 M646,491.5 L658,491.5" stroke="#4a88c8" stroke-width="1.6"/>
<path d="M656.5,489 v8 M652.5,493 h8" stroke="#0a5a0a" stroke-width="3.6"/>
<path d="M656.5,489.5 v7 M653,493 h7" stroke="#30b030" stroke-width="2"/>
<path d="M673.5,483 L673.5,495 M678.5,483 L678.5,495 M670,486.5 L682,486.5 M670,491.5 L682,491.5" stroke="#1c4a80" stroke-width="3.4"/>
<path d="M673.5,483 L673.5,495 M678.5,483 L678.5,495 M670,486.5 L682,486.5 M670,491.5 L682,491.5" stroke="#4a88c8" stroke-width="1.6"/>
<path d="M680,490 l6,6 M686,490 l-6,6" stroke="#b03018" stroke-width="1.8"/>
<ellipse cx="709.5" cy="486" rx="4.6" ry="4.8" fill="#2a2a2a"/>
<path d="M703,497 L703,494.5 Q703.5,490.5 707,490.5 L712,490.5 Q715.5,490.5 716,494.5 L716,497 Z" fill="#2a2a2a"/>
<path d="M710.5,488 q1,-3 3.5,-2.5 q2.5,1 0.5,3.5 q-1.5,1 -1.5,3" stroke="#e8c020" stroke-width="1.6" fill="none"/>
<rect x="712" y="494" width="2" height="2" fill="#e8c020"/>
<ellipse cx="733.5" cy="486" rx="4.6" ry="4.8" fill="#2a2a2a"/>
<path d="M727,497 L727,494.5 Q727.5,490.5 731,490.5 L736,490.5 Q739.5,490.5 740,494.5 L740,497 Z" fill="#2a2a2a"/>
<path d="M737.5,489 v8 M733.5,493 h8" stroke="#0a5a0a" stroke-width="3.6"/>
<path d="M737.5,489.5 v7 M734,493 h7" stroke="#30b030" stroke-width="2"/>
<ellipse cx="757.5" cy="486" rx="4.6" ry="4.8" fill="#2a2a2a"/>
<path d="M751,497 L751,494.5 Q751.5,490.5 755,490.5 L760,490.5 Q763.5,490.5 764,494.5 L764,497 Z" fill="#2a2a2a"/>
<path d="M758,490 l6,6 M764,490 l-6,6" stroke="#c84020" stroke-width="1.8"/>
<rect x="607" y="503" width="100" height="168" fill="#ffffff"/>
<rect x="607" y="503" width="100" height="1" fill="#808080"/>
<rect x="607" y="503" width="1" height="167" fill="#808080"/>
<rect x="607" y="670" width="100" height="1" fill="#ffffff"/>
<rect x="706" y="503" width="1" height="168" fill="#ffffff"/>
<rect x="608" y="504" width="98" height="1" fill="#404040"/>
<rect x="608" y="504" width="1" height="165" fill="#404040"/>
<rect x="608" y="669" width="98" height="1" fill="#d4d0c8"/>
<rect x="705" y="504" width="1" height="166" fill="#d4d0c8"/>
<text x="612" y="516" font-size="12.5" fill="#000" textLength="33.1" lengthAdjust="spacingAndGlyphs" font-family='"Liberation Sans", sans-serif'>Server</text>
<rect x="609" y="519" width="81" height="16" fill="#606060"/>
<text x="612" y="531" font-size="12.5" fill="#ffffff" textLength="24.4" lengthAdjust="spacingAndGlyphs" font-family='"Liberation Sans", sans-serif'>#test</text>
<rect x="690" y="505" width="15" height="149" fill="#d4d0c8"/>
<rect x="690" y="505" width="15" height="16" fill="#c0c0c0"/>
<rect x="690" y="505" width="14" height="1" fill="#ffffff"/>
<rect x="690" y="505" width="1" height="15" fill="#ffffff"/>
<rect x="690" y="520" width="15" height="1" fill="#404040"/>
<rect x="704" y="505" width="1" height="16" fill="#404040"/>
<rect x="691" y="506" width="12" height="1" fill="#dfdfdf"/>
<rect x="691" y="506" width="1" height="13" fill="#dfdfdf"/>
<rect x="691" y="519" width="13" height="1" fill="#808080"/>
<rect x="703" y="506" width="1" height="14" fill="#808080"/>
<polygon points="697.5,509 701,512.5 699,512.5 699,516 696,516 696,512.5 694,512.5" fill="#808080"/>
<rect x="690" y="638" width="15" height="16" fill="#c0c0c0"/>
<rect x="690" y="638" width="14" height="1" fill="#ffffff"/>
<rect x="690" y="638" width="1" height="15" fill="#ffffff"/>
<rect x="690" y="653" width="15" height="1" fill="#404040"/>
<rect x="704" y="638" width="1" height="16" fill="#404040"/>
<rect x="691" y="639" width="12" height="1" fill="#dfdfdf"/>
<rect x="691" y="639" width="1" height="13" fill="#dfdfdf"/>
<rect x="691" y="652" width="13" height="1" fill="#808080"/>
<rect x="703" y="639" width="1" height="14" fill="#808080"/>
<polygon points="697.5,649 701,645.5 699,645.5 699,642 696,642 696,645.5 694,645.5" fill="#808080"/>
<rect x="609" y="654" width="81" height="15" fill="#d4d0c8"/>
<rect x="609" y="654" width="16" height="15" fill="#c0c0c0"/>
<rect x="609" y="654" width="15" height="1" fill="#ffffff"/>
<rect x="609" y="654" width="1" height="14" fill="#ffffff"/>
<rect x="609" y="668" width="16" height="1" fill="#404040"/>
<rect x="624" y="654" width="1" height="15" fill="#404040"/>
<rect x="610" y="655" width="13" height="1" fill="#dfdfdf"/>
<rect x="610" y="655" width="1" height="12" fill="#dfdfdf"/>
<rect x="610" y="667" width="14" height="1" fill="#808080"/>
<rect x="623" y="655" width="1" height="13" fill="#808080"/>
<polygon points="613,661.5 616.5,658 616.5,660 620,660 620,663 616.5,663 616.5,665" fill="#808080"/>
<rect x="674" y="654" width="16" height="15" fill="#c0c0c0"/>
<rect x="674" y="654" width="15" height="1" fill="#ffffff"/>
<rect x="674" y="654" width="1" height="14" fill="#ffffff"/>
<rect x="674" y="668" width="16" height="1" fill="#404040"/>
<rect x="689" y="654" width="1" height="15" fill="#404040"/>
<rect x="675" y="655" width="13" height="1" fill="#dfdfdf"/>
<rect x="675" y="655" width="1" height="12" fill="#dfdfdf"/>
<rect x="675" y="667" width="14" height="1" fill="#808080"/>
<rect x="688" y="655" width="1" height="13" fill="#808080"/>
<polygon points="685,661.5 681.5,658 681.5,660 678,660 678,663 681.5,663 681.5,665" fill="#808080"/>
<rect x="690" y="654" width="15" height="15" fill="#c0c0c0"/>
<rect x="711" y="503" width="444" height="149" fill="#ffffff"/>
<rect x="711" y="503" width="444" height="1" fill="#808080"/>
<rect x="711" y="503" width="1" height="148" fill="#808080"/>
<rect x="711" y="651" width="444" height="1" fill="#ffffff"/>
<rect x="1154" y="503" width="1" height="149" fill="#ffffff"/>
<rect x="712" y="504" width="442" height="1" fill="#404040"/>
<rect x="712" y="504" width="1" height="146" fill="#404040"/>
<rect x="712" y="650" width="442" height="1" fill="#d4d0c8"/>
<rect x="1153" y="504" width="1" height="147" fill="#d4d0c8"/>
<text x="716" y="515" font-size="12.5" fill="#808080" letter-spacing="-0.500" font-family='"Liberation Mono", monospace'>13:14:06</text>
<text x="716" y="531" font-size="12.5" fill="#808080" letter-spacing="-0.500" font-family='"Liberation Mono", monospace'>13:14:06</text>
<text x="716" y="547" font-size="12.5" fill="#808080" letter-spacing="-0.500" font-family='"Liberation Mono", monospace'>13:14:06</text>
<text x="716" y="563" font-size="12.5" fill="#808080" letter-spacing="-0.500" font-family='"Liberation Mono", monospace'>13:14:06</text>
<text x="866" y="515" font-size="12.5" fill="#10b010" letter-spacing="-0.500" font-family='"Liberation Mono", monospace'>*** seren1ty [seren1ty!~seren1ty@h-127-</text>
<text x="866" y="531" font-size="12.5" fill="#1010d0" letter-spacing="-0.500" font-family='"Liberation Mono", monospace'>*** Topic is " 15.00  | 00.15  | 14  |</text>
<text x="866" y="547" font-size="12.5" fill="#1010d0" letter-spacing="-0.500" font-family='"Liberation Mono", monospace'>*** (set by He-Man!i.am@friend.of.dalne</text>
<text x="794" y="563" font-size="12.5" fill="#000" font-weight="bold" letter-spacing="-0.500" font-family='"Liberation Mono", monospace'>&lt;</text>
<text x="802" y="563" font-size="12" fill="#000" font-weight="bold" textLength="53" lengthAdjust="spacingAndGlyphs" font-family='"Liberation Sans", sans-serif'>Cringer&gt;</text>
<text x="873" y="563" font-size="12.5" fill="#000" letter-spacing="-0.500" font-family='"Liberation Mono", monospace'>seren1ty : Welcome to  #test  =)</text>
<rect x="1138" y="505" width="15" height="145" fill="#d4d0c8"/>
<rect x="1138" y="505" width="15" height="130" fill="#d4d0c8"/>
<rect x="1138" y="505" width="15" height="16" fill="#c0c0c0"/>
<rect x="1138" y="505" width="14" height="1" fill="#ffffff"/>
<rect x="1138" y="505" width="1" height="15" fill="#ffffff"/>
<rect x="1138" y="520" width="15" height="1" fill="#404040"/>
<rect x="1152" y="505" width="1" height="16" fill="#404040"/>
<rect x="1139" y="506" width="12" height="1" fill="#dfdfdf"/>
<rect x="1139" y="506" width="1" height="13" fill="#dfdfdf"/>
<rect x="1139" y="519" width="13" height="1" fill="#808080"/>
<rect x="1151" y="506" width="1" height="14" fill="#808080"/>
<polygon points="1145.5,509 1149,512.5 1147,512.5 1147,516 1144,516 1144,512.5 1142,512.5" fill="#808080"/>
<rect x="1138" y="619" width="15" height="16" fill="#c0c0c0"/>
<rect x="1138" y="619" width="14" height="1" fill="#ffffff"/>
<rect x="1138" y="619" width="1" height="15" fill="#ffffff"/>
<rect x="1138" y="634" width="15" height="1" fill="#404040"/>
<rect x="1152" y="619" width="1" height="16" fill="#404040"/>
<rect x="1139" y="620" width="12" height="1" fill="#dfdfdf"/>
<rect x="1139" y="620" width="1" height="13" fill="#dfdfdf"/>
<rect x="1139" y="633" width="13" height="1" fill="#808080"/>
<rect x="1151" y="620" width="1" height="14" fill="#808080"/>
<polygon points="1145.5,630 1149,626.5 1147,626.5 1147,623 1144,623 1144,626.5 1142,626.5" fill="#808080"/>
<rect x="713" y="635" width="425" height="15" fill="#d4d0c8"/>
<rect x="713" y="635" width="16" height="15" fill="#c0c0c0"/>
<rect x="713" y="635" width="15" height="1" fill="#ffffff"/>
<rect x="713" y="635" width="1" height="14" fill="#ffffff"/>
<rect x="713" y="649" width="16" height="1" fill="#404040"/>
<rect x="728" y="635" width="1" height="15" fill="#404040"/>
<rect x="714" y="636" width="13" height="1" fill="#dfdfdf"/>
<rect x="714" y="636" width="1" height="12" fill="#dfdfdf"/>
<rect x="714" y="648" width="14" height="1" fill="#808080"/>
<rect x="727" y="636" width="1" height="13" fill="#808080"/>
<polygon points="717,642.5 720.5,639 720.5,641 724,641 724,644 720.5,644 720.5,646" fill="#000000"/>
<rect x="1122" y="635" width="16" height="15" fill="#c0c0c0"/>
<rect x="1122" y="635" width="15" height="1" fill="#ffffff"/>
<rect x="1122" y="635" width="1" height="14" fill="#ffffff"/>
<rect x="1122" y="649" width="16" height="1" fill="#404040"/>
<rect x="1137" y="635" width="1" height="15" fill="#404040"/>
<rect x="1123" y="636" width="13" height="1" fill="#dfdfdf"/>
<rect x="1123" y="636" width="1" height="12" fill="#dfdfdf"/>
<rect x="1123" y="648" width="14" height="1" fill="#808080"/>
<rect x="1136" y="636" width="1" height="13" fill="#808080"/>
<polygon points="1133,642.5 1129.5,639 1129.5,641 1126,641 1126,644 1129.5,644 1129.5,646" fill="#000000"/>
<rect x="729" y="635" width="16" height="15" fill="#c0c0c0"/>
<rect x="729" y="635" width="15" height="1" fill="#ffffff"/>
<rect x="729" y="635" width="1" height="14" fill="#ffffff"/>
<rect x="729" y="649" width="16" height="1" fill="#404040"/>
<rect x="744" y="635" width="1" height="15" fill="#404040"/>
<rect x="730" y="636" width="13" height="1" fill="#dfdfdf"/>
<rect x="730" y="636" width="1" height="12" fill="#dfdfdf"/>
<rect x="730" y="648" width="14" height="1" fill="#808080"/>
<rect x="743" y="636" width="1" height="13" fill="#808080"/>
<rect x="1138" y="635" width="15" height="15" fill="#c0c0c0"/>
<rect x="1159" y="503" width="100" height="149" fill="#ffffff"/>
<rect x="1159" y="503" width="100" height="1" fill="#808080"/>
<rect x="1159" y="503" width="1" height="148" fill="#808080"/>
<rect x="1159" y="651" width="100" height="1" fill="#ffffff"/>
<rect x="1258" y="503" width="1" height="149" fill="#ffffff"/>
<rect x="1160" y="504" width="98" height="1" fill="#404040"/>
<rect x="1160" y="504" width="1" height="146" fill="#404040"/>
<rect x="1160" y="650" width="98" height="1" fill="#d4d0c8"/>
<rect x="1257" y="504" width="1" height="147" fill="#d4d0c8"/>
<text x="1163" y="515" font-size="12.5" fill="#000" textLength="43.1" lengthAdjust="spacingAndGlyphs" font-family='"Liberation Sans", sans-serif'>seren1ty</text>
<text x="1163" y="531" font-size="12.5" fill="#000" textLength="48.3" lengthAdjust="spacingAndGlyphs" font-family='"Liberation Sans", sans-serif'>@Cringer</text>
<text x="1163" y="547" font-size="12.5" fill="#000" textLength="51.4" lengthAdjust="spacingAndGlyphs" font-family='"Liberation Sans", sans-serif'>@He-Man</text>
<text x="1163" y="563" font-size="12.5" fill="#000" textLength="49.6" lengthAdjust="spacingAndGlyphs" font-family='"Liberation Sans", sans-serif'>@She-Ra</text>
<text x="1163" y="579" font-size="12.5" fill="#000" textLength="47.1" lengthAdjust="spacingAndGlyphs" font-family='"Liberation Sans", sans-serif'>@Sonny`</text>
<text x="1163" y="595" font-size="12.5" fill="#000" textLength="68.1" lengthAdjust="spacingAndGlyphs" font-family='"Liberation Sans", sans-serif'>@World-Chat</text>
<rect x="1242" y="505" width="15" height="130" fill="#d4d0c8"/>
<rect x="1242" y="505" width="15" height="16" fill="#c0c0c0"/>
<rect x="1242" y="505" width="14" height="1" fill="#ffffff"/>
<rect x="1242" y="505" width="1" height="15" fill="#ffffff"/>
<rect x="1242" y="520" width="15" height="1" fill="#404040"/>
<rect x="1256" y="505" width="1" height="16" fill="#404040"/>
<rect x="1243" y="506" width="12" height="1" fill="#dfdfdf"/>
<rect x="1243" y="506" width="1" height="13" fill="#dfdfdf"/>
<rect x="1243" y="519" width="13" height="1" fill="#808080"/>
<rect x="1255" y="506" width="1" height="14" fill="#808080"/>
<polygon points="1249.5,509 1253,512.5 1251,512.5 1251,516 1248,516 1248,512.5 1246,512.5" fill="#808080"/>
<rect x="1242" y="619" width="15" height="16" fill="#c0c0c0"/>
<rect x="1242" y="619" width="14" height="1" fill="#ffffff"/>
<rect x="1242" y="619" width="1" height="15" fill="#ffffff"/>
<rect x="1242" y="634" width="15" height="1" fill="#404040"/>
<rect x="1256" y="619" width="1" height="16" fill="#404040"/>
<rect x="1243" y="620" width="12" height="1" fill="#dfdfdf"/>
<rect x="1243" y="620" width="1" height="13" fill="#dfdfdf"/>
<rect x="1243" y="633" width="13" height="1" fill="#808080"/>
<rect x="1255" y="620" width="1" height="14" fill="#808080"/>
<polygon points="1249.5,630 1253,626.5 1251,626.5 1251,623 1248,623 1248,626.5 1246,626.5" fill="#808080"/>
<rect x="1161" y="635" width="81" height="15" fill="#d4d0c8"/>
<rect x="1161" y="635" width="16" height="15" fill="#c0c0c0"/>
<rect x="1161" y="635" width="15" height="1" fill="#ffffff"/>
<rect x="1161" y="635" width="1" height="14" fill="#ffffff"/>
<rect x="1161" y="649" width="16" height="1" fill="#404040"/>
<rect x="1176" y="635" width="1" height="15" fill="#404040"/>
<rect x="1162" y="636" width="13" height="1" fill="#dfdfdf"/>
<rect x="1162" y="636" width="1" height="12" fill="#dfdfdf"/>
<rect x="1162" y="648" width="14" height="1" fill="#808080"/>
<rect x="1175" y="636" width="1" height="13" fill="#808080"/>
<polygon points="1165,642.5 1168.5,639 1168.5,641 1172,641 1172,644 1168.5,644 1168.5,646" fill="#808080"/>
<rect x="1226" y="635" width="16" height="15" fill="#c0c0c0"/>
<rect x="1226" y="635" width="15" height="1" fill="#ffffff"/>
<rect x="1226" y="635" width="1" height="14" fill="#ffffff"/>
<rect x="1226" y="649" width="16" height="1" fill="#404040"/>
<rect x="1241" y="635" width="1" height="15" fill="#404040"/>
<rect x="1227" y="636" width="13" height="1" fill="#dfdfdf"/>
<rect x="1227" y="636" width="1" height="12" fill="#dfdfdf"/>
<rect x="1227" y="648" width="14" height="1" fill="#808080"/>
<rect x="1240" y="636" width="1" height="13" fill="#808080"/>
<polygon points="1237,642.5 1233.5,639 1233.5,641 1230,641 1230,644 1233.5,644 1233.5,646" fill="#808080"/>
<rect x="1242" y="635" width="15" height="15" fill="#c0c0c0"/>
<rect x="711" y="652" width="548" height="19" fill="#ffffff"/>
<rect x="711" y="652" width="548" height="1" fill="#808080"/>
<rect x="711" y="652" width="1" height="18" fill="#808080"/>
<rect x="711" y="670" width="548" height="1" fill="#ffffff"/>
<rect x="1258" y="652" width="1" height="19" fill="#ffffff"/>
<rect x="712" y="653" width="546" height="1" fill="#404040"/>
<rect x="712" y="653" width="1" height="16" fill="#404040"/>
<rect x="712" y="669" width="546" height="1" fill="#d4d0c8"/>
<rect x="1257" y="653" width="1" height="17" fill="#d4d0c8"/>
<rect x="0" y="692" width="1280" height="28" fill="#c0c0c0"/>
<rect x="0" y="692" width="1280" height="1" fill="#ffffff"/>
<rect x="3" y="695" width="140" height="22" fill="#c0c0c0"/>
<rect x="3" y="695" width="139" height="1" fill="#ffffff"/>
<rect x="3" y="695" width="1" height="21" fill="#ffffff"/>
<rect x="3" y="716" width="140" height="1" fill="#404040"/>
<rect x="142" y="695" width="1" height="22" fill="#404040"/>
<rect x="4" y="696" width="137" height="1" fill="#dfdfdf"/>
<rect x="4" y="696" width="1" height="19" fill="#dfdfdf"/>
<rect x="4" y="715" width="138" height="1" fill="#808080"/>
<rect x="141" y="696" width="1" height="20" fill="#808080"/>
<rect x="9" y="699" width="14" height="14" fill="#000000" rx="2"/>
<rect x="11" y="702" width="1" height="1" fill="#1a8a2a"/>
<rect x="11" y="709" width="1" height="1" fill="#1a8a2a"/>
<rect x="13" y="702" width="1" height="1" fill="#1a8a2a"/>
<rect x="13" y="709" width="1" height="1" fill="#1a8a2a"/>
<rect x="15" y="702" width="1" height="1" fill="#1a8a2a"/>
<rect x="15" y="709" width="1" height="1" fill="#1a8a2a"/>
<rect x="17" y="702" width="1" height="1" fill="#1a8a2a"/>
<rect x="17" y="709" width="1" height="1" fill="#1a8a2a"/>
<rect x="19" y="702" width="1" height="1" fill="#1a8a2a"/>
<rect x="19" y="709" width="1" height="1" fill="#1a8a2a"/>
<rect x="21" y="702" width="1" height="1" fill="#1a8a2a"/>
<rect x="21" y="709" width="1" height="1" fill="#1a8a2a"/>
<polyline points="10,706.5 13.5,706.5 15,702.5 17,709 19,706.5 22,706.5" fill="none" stroke="#40e060" stroke-width="1.2"/>
<text x="27" y="710" font-size="12.5" fill="#000" textLength="83" lengthAdjust="spacingAndGlyphs" font-family='"Liberation Sans", sans-serif'>ProcessManager</text>
<rect x="146" y="695" width="140" height="22" fill="#c0c0c0"/>
<rect x="146" y="695" width="139" height="1" fill="#ffffff"/>
<rect x="146" y="695" width="1" height="21" fill="#ffffff"/>
<rect x="146" y="716" width="140" height="1" fill="#404040"/>
<rect x="285" y="695" width="1" height="22" fill="#404040"/>
<rect x="147" y="696" width="137" height="1" fill="#dfdfdf"/>
<rect x="147" y="696" width="1" height="19" fill="#dfdfdf"/>
<rect x="147" y="715" width="138" height="1" fill="#808080"/>
<rect x="284" y="696" width="1" height="20" fill="#808080"/>
<rect x="152" y="699" width="14" height="14" fill="#000000" rx="2"/>
<polyline points="154.5,701.5 157,703.5 154.5,705.5" fill="none" stroke="#e8e8e8" stroke-width="1"/>
<text x="170" y="710" font-size="12.5" fill="#404040" textLength="88" lengthAdjust="spacingAndGlyphs" font-family='"Liberation Sans", sans-serif'>[anon@courage:/]</text>
<rect x="289" y="695" width="140" height="22" fill="#c0c0c0"/>
<rect x="289" y="695" width="139" height="1" fill="#ffffff"/>
<rect x="289" y="695" width="1" height="21" fill="#ffffff"/>
<rect x="289" y="716" width="140" height="1" fill="#404040"/>
<rect x="428" y="695" width="1" height="22" fill="#404040"/>
<rect x="290" y="696" width="137" height="1" fill="#dfdfdf"/>
<rect x="290" y="696" width="1" height="19" fill="#dfdfdf"/>
<rect x="290" y="715" width="138" height="1" fill="#808080"/>
<rect x="427" y="696" width="1" height="20" fill="#808080"/>
<path d="M295.5,700.5 h5 l1,1 h7 v10 h-13 z" fill="#e0a070" stroke="#8a5020" stroke-width="1"/>
<rect x="296.5" y="702.5" width="11" height="8" fill="#f0c090"/>
<text x="313" y="710" font-size="12.5" fill="#404040" textLength="107" lengthAdjust="spacingAndGlyphs" font-family='"Liberation Sans", sans-serif'>[FileManager: /usr/...</text>
<rect x="432" y="695" width="140" height="22" fill="#d4d0c8"/>
<rect x="432" y="695" width="140" height="1" fill="#404040"/>
<rect x="432" y="716" width="140" height="1" fill="#404040"/>
<rect x="432" y="695" width="1" height="22" fill="#404040"/>
<rect x="571" y="695" width="1" height="22" fill="#404040"/>
<rect x="433" y="696" width="138" height="1" fill="#808080"/>
<rect x="433" y="696" width="1" height="20" fill="#808080"/>
<text x="436" y="710" font-size="12" fill="#000" font-weight="bold" textLength="32" lengthAdjust="spacingAndGlyphs" font-family='"Liberation Sans", sans-serif'>Form1</text>
<rect x="575" y="695" width="140" height="22" fill="#c0c0c0"/>
<rect x="575" y="695" width="139" height="1" fill="#ffffff"/>
<rect x="575" y="695" width="1" height="21" fill="#ffffff"/>
<rect x="575" y="716" width="140" height="1" fill="#404040"/>
<rect x="714" y="695" width="1" height="22" fill="#404040"/>
<rect x="576" y="696" width="137" height="1" fill="#dfdfdf"/>
<rect x="576" y="696" width="1" height="19" fill="#dfdfdf"/>
<rect x="576" y="715" width="138" height="1" fill="#808080"/>
<rect x="713" y="696" width="1" height="20" fill="#808080"/>
<text x="579" y="710" font-size="12.5" fill="#000" textLength="40" lengthAdjust="spacingAndGlyphs" font-family='"Liberation Sans", sans-serif'>Widgets</text>
<rect x="718" y="695" width="140" height="22" fill="#c0c0c0"/>
<rect x="718" y="695" width="139" height="1" fill="#ffffff"/>
<rect x="718" y="695" width="1" height="21" fill="#ffffff"/>
<rect x="718" y="716" width="140" height="1" fill="#404040"/>
<rect x="857" y="695" width="1" height="22" fill="#404040"/>
<rect x="719" y="696" width="137" height="1" fill="#dfdfdf"/>
<rect x="719" y="696" width="1" height="19" fill="#dfdfdf"/>
<rect x="719" y="715" width="138" height="1" fill="#808080"/>
<rect x="856" y="696" width="1" height="20" fill="#808080"/>
<text x="722" y="710" font-size="12.5" fill="#000" textLength="54" lengthAdjust="spacingAndGlyphs" font-family='"Liberation Sans", sans-serif'>Properties</text>
<rect x="861" y="695" width="140" height="22" fill="#c0c0c0"/>
<rect x="861" y="695" width="139" height="1" fill="#ffffff"/>
<rect x="861" y="695" width="1" height="21" fill="#ffffff"/>
<rect x="861" y="716" width="140" height="1" fill="#404040"/>
<rect x="1000" y="695" width="1" height="22" fill="#404040"/>
<rect x="862" y="696" width="137" height="1" fill="#dfdfdf"/>
<rect x="862" y="696" width="1" height="19" fill="#dfdfdf"/>
<rect x="862" y="715" width="138" height="1" fill="#808080"/>
<rect x="999" y="696" width="1" height="20" fill="#808080"/>
<text x="865" y="710" font-size="12.5" fill="#000" textLength="135" lengthAdjust="spacingAndGlyphs" font-family='"Liberation Sans", sans-serif'>IRC Client: seren1ty@i...</text>
<rect x="1004" y="695" width="140" height="22" fill="#c0c0c0"/>
<rect x="1004" y="695" width="139" height="1" fill="#ffffff"/>
<rect x="1004" y="695" width="1" height="21" fill="#ffffff"/>
<rect x="1004" y="716" width="140" height="1" fill="#404040"/>
<rect x="1143" y="695" width="1" height="22" fill="#404040"/>
<rect x="1005" y="696" width="137" height="1" fill="#dfdfdf"/>
<rect x="1005" y="696" width="1" height="19" fill="#dfdfdf"/>
<rect x="1005" y="715" width="138" height="1" fill="#808080"/>
<rect x="1142" y="696" width="1" height="20" fill="#808080"/>
<rect x="1010" y="699" width="14" height="14" fill="#000000" rx="2"/>
<polyline points="1012.5,701.5 1015,703.5 1012.5,705.5" fill="none" stroke="#e8e8e8" stroke-width="1"/>
<text x="1028" y="710" font-size="12.5" fill="#000" textLength="97" lengthAdjust="spacingAndGlyphs" font-family='"Liberation Sans", sans-serif'>anon@courage:/dev</text>
<path d="M395.5,226.5 L395.5,239.5 L398.5,237 L401.5,242.5 L404,241.5 L401.5,236.5 L405.5,236.5 Z" fill="#fff" stroke="#000" stroke-width="1"/></svg>
</body></html>
